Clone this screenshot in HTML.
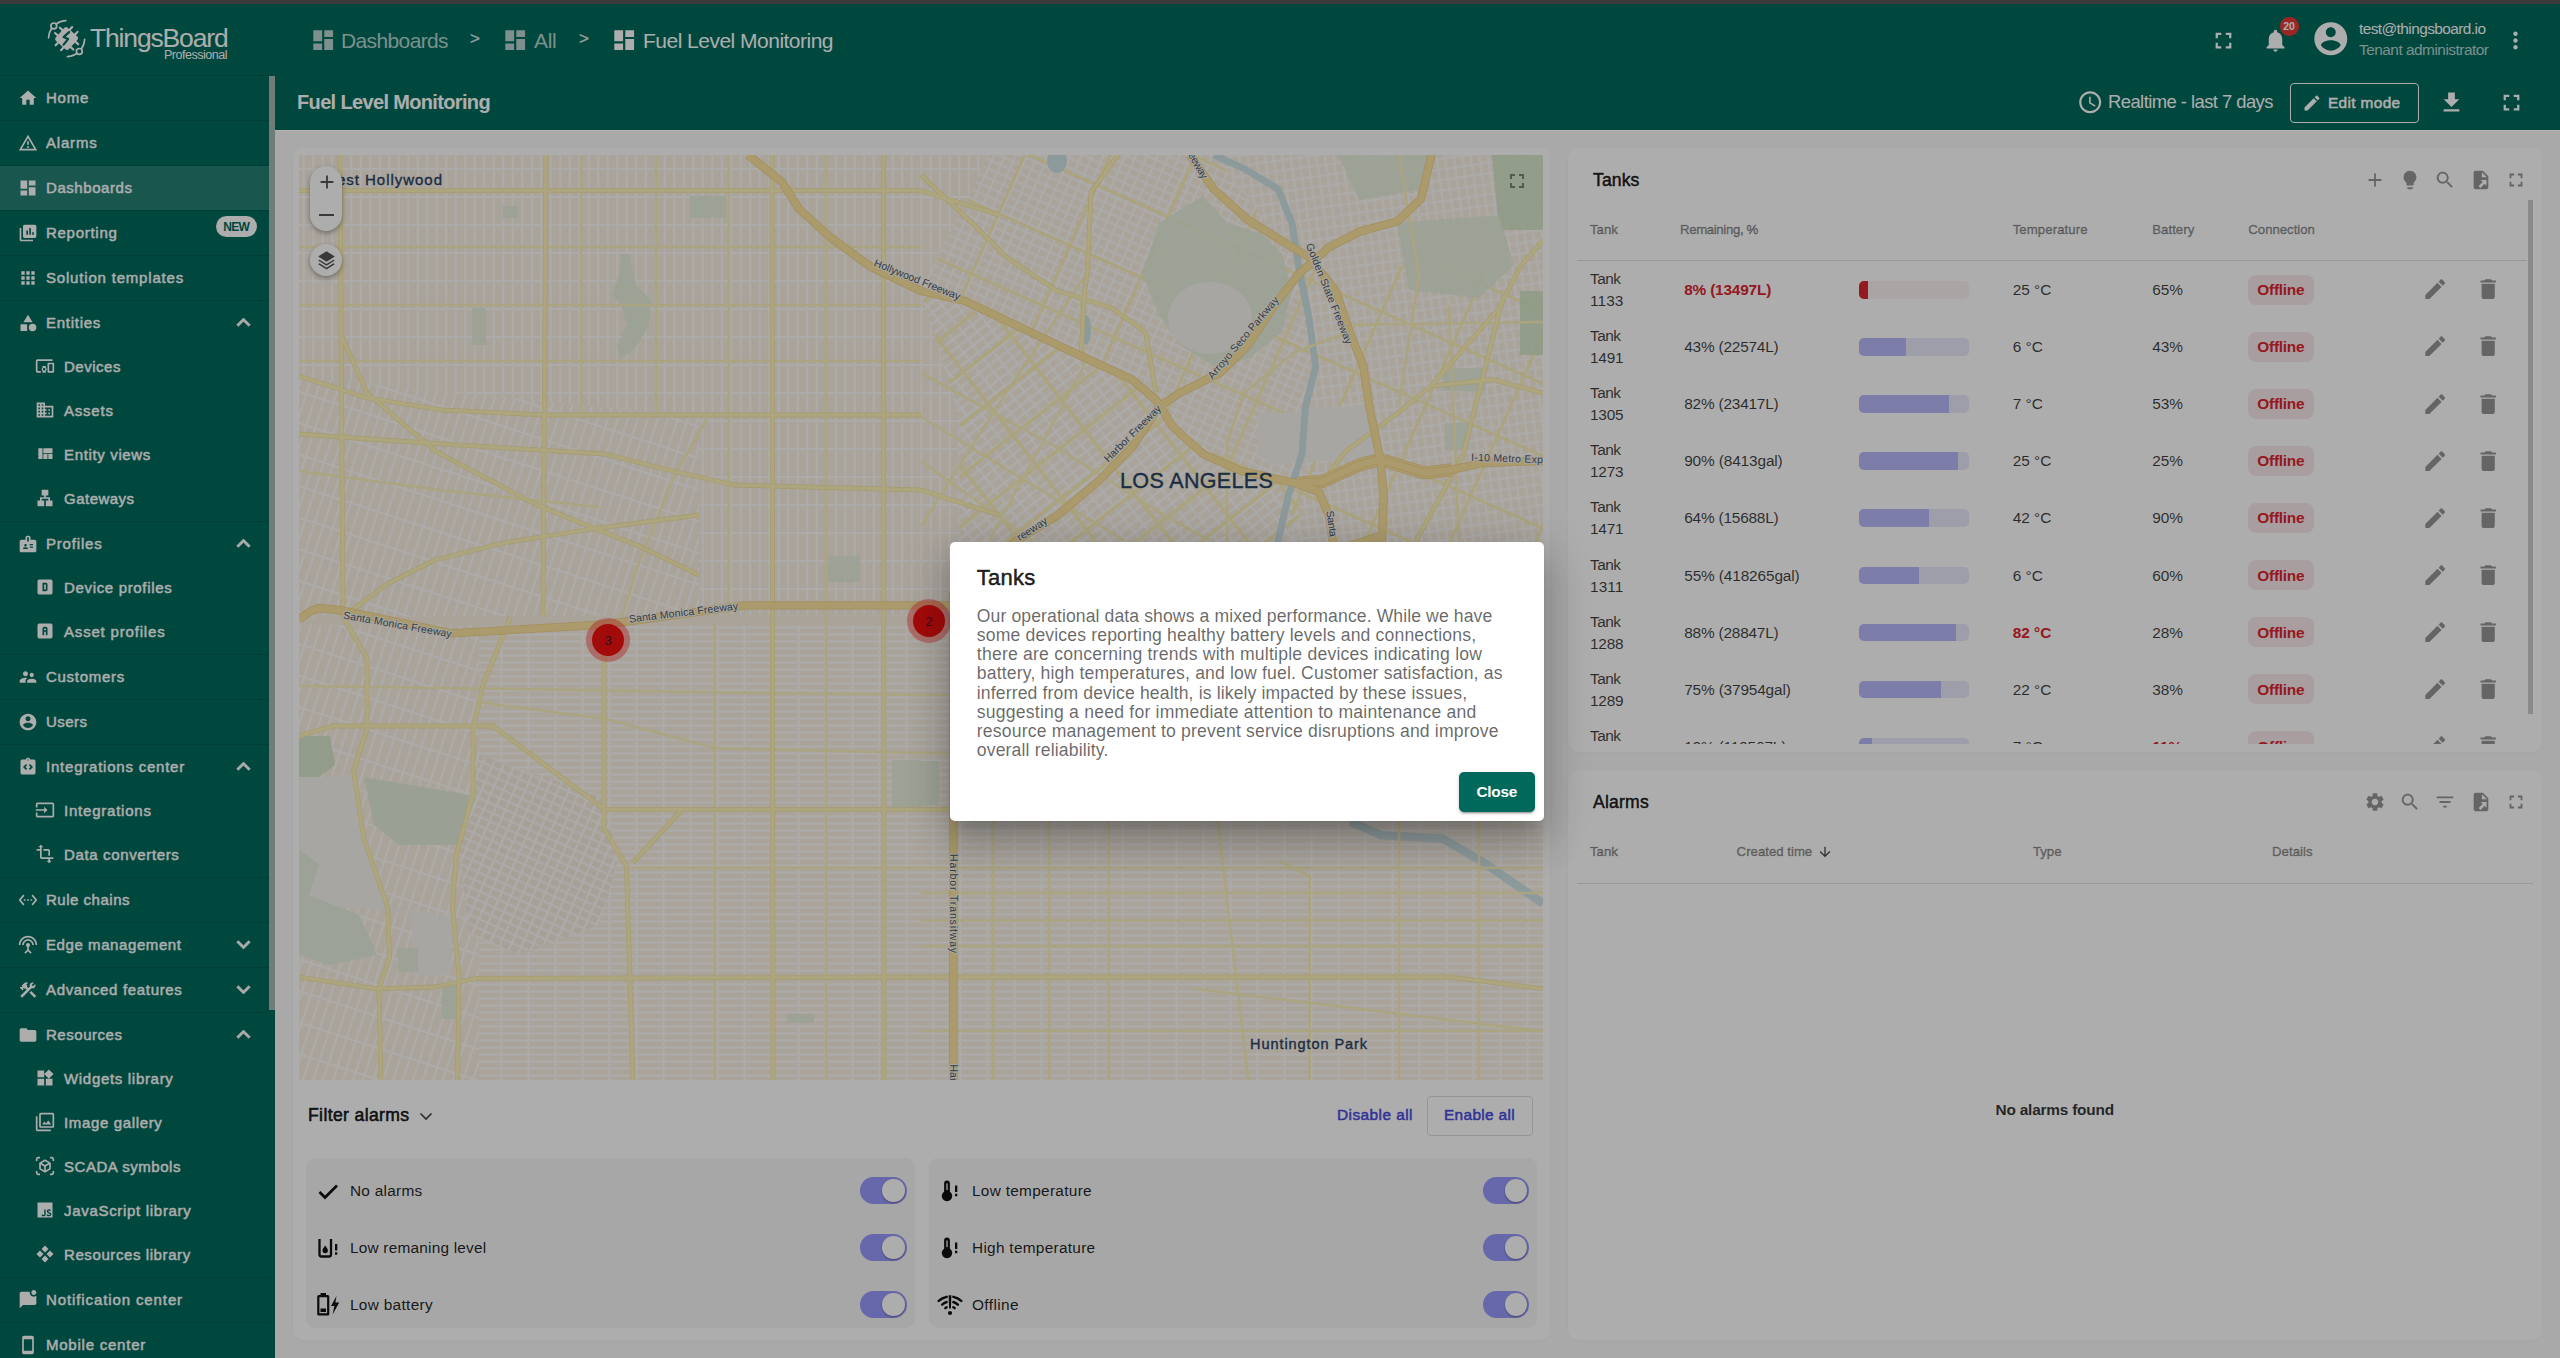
<!DOCTYPE html>
<html><head><meta charset="utf-8"><title>ThingsBoard</title>
<style>
html,body{margin:0;padding:0;}
body{width:2560px;height:1358px;overflow:hidden;position:relative;background:#fafafa;font-family:"Liberation Sans",sans-serif;}
.t{position:absolute;white-space:nowrap;margin:0;padding:0;}
.i{position:absolute;display:block;}
.b{position:absolute;box-sizing:border-box;}
</style></head><body>
<div class="b" style="left:0px;top:0px;width:2560px;height:1358px;background:#fafafa;"></div>
<div class="b" style="left:0px;top:4px;width:275px;height:1354px;background:#00695c;"></div>
<div class="b" style="left:275px;top:4px;width:2285px;height:71px;background:#00695c;"></div>
<div class="b" style="left:275px;top:75px;width:2285px;height:55px;background:#00695c;box-shadow:0 1px 0 rgba(255,255,255,0.0);"></div>
<div class="b" style="left:0px;top:74.5px;width:269px;height:1px;background:rgba(0,0,0,0.13);"></div>
<svg class="i" style="left:17.50px;top:87.50px;width:20px;height:20px;" viewBox="0 0 24 24"><path fill="#fff" fill-rule="evenodd" d="M10 20v-6h4v6h5v-8h3L12 3 2 12h3v8z"/></svg>
<div class="t" style="left:46.00px;top:90.20px;font-size:15px;line-height:15px;color:#fff;letter-spacing:0.747px;-webkit-text-stroke:0.45px #fff;">Home</div>
<div class="b" style="left:0px;top:119.5px;width:269px;height:1px;background:rgba(0,0,0,0.13);"></div>
<svg class="i" style="left:17.50px;top:132.50px;width:20px;height:20px;" viewBox="0 0 24 24"><path fill="#fff" fill-rule="evenodd" d="M12 5.99L19.53 19H4.47L12 5.99M12 2L1 21h22L12 2zm1 14h-2v2h2v-2zm0-6h-2v4h2v-4z"/></svg>
<div class="t" style="left:46.00px;top:135.20px;font-size:15px;line-height:15px;color:#fff;letter-spacing:0.805px;-webkit-text-stroke:0.45px #fff;">Alarms</div>
<div class="b" style="left:0px;top:164.5px;width:269px;height:1px;background:rgba(0,0,0,0.13);"></div>
<div class="b" style="left:0px;top:166.0px;width:269px;height:44px;background:rgba(255,255,255,0.15);"></div>
<svg class="i" style="left:17.50px;top:177.50px;width:20px;height:20px;" viewBox="0 0 24 24"><path fill="#fff" fill-rule="evenodd" d="M3 13h8V3H3v10zm0 8h8v-6H3v6zm10 0h8V11h-8v10zm0-18v6h8V3h-8z"/></svg>
<div class="t" style="left:46.00px;top:180.20px;font-size:15px;line-height:15px;color:#fff;letter-spacing:0.562px;-webkit-text-stroke:0.45px #fff;">Dashboards</div>
<div class="b" style="left:0px;top:209.5px;width:269px;height:1px;background:rgba(0,0,0,0.13);"></div>
<svg class="i" style="left:17.50px;top:222.50px;width:20px;height:20px;" viewBox="0 0 24 24"><path fill="#fff" fill-rule="evenodd" d="M4 6H2v14c0 1.1.9 2 2 2h14v-2H4V6zm16-4H8c-1.1 0-2 .9-2 2v12c0 1.1.9 2 2 2h12c1.1 0 2-.9 2-2V4c0-1.1-.9-2-2-2zm-8 12h-2V9h2v5zm3.5 0h-2V6h2v8zm3.5 0h-2v-3h2v3z"/></svg>
<div class="t" style="left:46.00px;top:225.20px;font-size:15px;line-height:15px;color:#fff;letter-spacing:0.718px;-webkit-text-stroke:0.45px #fff;">Reporting</div>
<div class="b" style="left:215.5px;top:215.5px;width:41.5px;height:21.5px;background:#fff;border-radius:11px;"></div>
<div class="t" style="left:223.20px;top:220.84px;font-size:12px;line-height:12px;color:#00695c;font-weight:700;letter-spacing:-0.666px;">NEW</div>
<div class="b" style="left:0px;top:254.5px;width:269px;height:1px;background:rgba(0,0,0,0.13);"></div>
<svg class="i" style="left:17.50px;top:267.50px;width:20px;height:20px;" viewBox="0 0 24 24"><path fill="#fff" fill-rule="evenodd" d="M4 8h4V4H4v4zm6 12h4v-4h-4v4zm-6 0h4v-4H4v4zm0-6h4v-4H4v4zm6 0h4v-4h-4v4zm6-10v4h4V4h-4zm-6 4h4V4h-4v4zm6 6h4v-4h-4v4zm0 6h4v-4h-4v4z"/></svg>
<div class="t" style="left:46.00px;top:270.20px;font-size:15px;line-height:15px;color:#fff;letter-spacing:0.811px;-webkit-text-stroke:0.45px #fff;">Solution templates</div>
<div class="b" style="left:0px;top:299.5px;width:269px;height:1px;background:rgba(0,0,0,0.13);"></div>
<svg class="i" style="left:17.50px;top:312.50px;width:20px;height:20px;" viewBox="0 0 24 24"><path fill="#fff" fill-rule="evenodd" d="M12 2l-5.5 9h11zM17.5 13a4.5 4.5 0 1 0 0 9a4.5 4.5 0 1 0 0-9zM3 13.5h8v8H3z"/></svg>
<div class="t" style="left:46.00px;top:315.20px;font-size:15px;line-height:15px;color:#fff;letter-spacing:0.726px;-webkit-text-stroke:0.45px #fff;">Entities</div>
<svg class="i" style="left:229.50px;top:309.00px;width:27px;height:27px;stroke:#fff;stroke-width:0.7px;" viewBox="0 0 24 24"><path fill="#fff" fill-rule="evenodd" d="M12 8l-6 6 1.41 1.41L12 10.83l4.59 4.58L18 14z"/></svg>
<svg class="i" style="left:35.00px;top:356.00px;width:20px;height:20px;" viewBox="0 0 24 24"><path fill="#fff" fill-rule="evenodd" d="M3 6h18V4H3c-1.1 0-2 .9-2 2v12c0 1.1.9 2 2 2h4v-2H3V6zm10 6H9v1.78c-.61.55-1 1.33-1 2.22s.39 1.67 1 2.22V20h4v-1.78c.61-.55 1-1.34 1-2.22s-.39-1.67-1-2.22V12zm-2 5.5c-.83 0-1.5-.67-1.5-1.5s.67-1.5 1.5-1.5 1.5.67 1.5 1.5-.67 1.5-1.5 1.5zM22 8h-6c-.5 0-1 .5-1 1v10c0 .5.5 1 1 1h6c.5 0 1-.5 1-1V9c0-.5-.5-1-1-1zm-1 10h-4v-8h4v8z"/></svg>
<div class="t" style="left:64.00px;top:358.70px;font-size:15px;line-height:15px;color:#fff;letter-spacing:0.521px;-webkit-text-stroke:0.45px #fff;">Devices</div>
<svg class="i" style="left:35.00px;top:400.00px;width:20px;height:20px;" viewBox="0 0 24 24"><path fill="#fff" fill-rule="evenodd" d="M12 7V3H2v18h20V7H12zM6 19H4v-2h2v2zm0-4H4v-2h2v2zm0-4H4V9h2v2zm0-4H4V5h2v2zm4 12H8v-2h2v2zm0-4H8v-2h2v2zm0-4H8V9h2v2zm0-4H8V5h2v2zm10 12h-8v-2h2v-2h-2v-2h2v-2h-2V9h8v10zm-2-8h-2v2h2v-2zm0 4h-2v2h2v-2z"/></svg>
<div class="t" style="left:64.00px;top:402.70px;font-size:15px;line-height:15px;color:#fff;letter-spacing:0.781px;-webkit-text-stroke:0.45px #fff;">Assets</div>
<svg class="i" style="left:35.00px;top:444.00px;width:20px;height:20px;" viewBox="0 0 24 24"><path fill="#fff" fill-rule="evenodd" d="M10 18h5v-6h-5v6zm-6 0h5V5H4v13zm12 0h5v-6h-5v6zM10 5v6h11V5H10z"/></svg>
<div class="t" style="left:64.00px;top:446.70px;font-size:15px;line-height:15px;color:#fff;letter-spacing:0.651px;-webkit-text-stroke:0.45px #fff;">Entity views</div>
<svg class="i" style="left:35.00px;top:488.00px;width:20px;height:20px;" viewBox="0 0 24 24"><path fill="#fff" fill-rule="evenodd" d="M13 22h8v-7h-3v-4h-5V9h3V2H8v7h3v2H6v4H3v7h8v-7H8v-2h8v2h-3z"/></svg>
<div class="t" style="left:64.00px;top:490.70px;font-size:15px;line-height:15px;color:#fff;letter-spacing:0.488px;-webkit-text-stroke:0.45px #fff;">Gateways</div>
<div class="b" style="left:0px;top:520.5px;width:269px;height:1px;background:rgba(0,0,0,0.13);"></div>
<svg class="i" style="left:17.50px;top:533.50px;width:20px;height:20px;" viewBox="0 0 24 24"><path fill="#fff" fill-rule="evenodd" d="M20 7h-5V4c0-1.1-.9-2-2-2h-2c-1.1 0-2 .9-2 2v3H4c-1.1 0-2 .9-2 2v11c0 1.1.9 2 2 2h16c1.1 0 2-.9 2-2V9c0-1.1-.9-2-2-2zM9 12c.83 0 1.5.67 1.5 1.5S9.83 15 9 15s-1.5-.67-1.5-1.5S8.17 12 9 12zm3 6H6v-.75c0-1 2-1.5 3-1.5s3 .5 3 1.5V18zm1-9h-2V4h2v5zm5 7.5h-4V15h4v1.5zm0-3h-4V12h4v1.5z"/></svg>
<div class="t" style="left:46.00px;top:536.20px;font-size:15px;line-height:15px;color:#fff;letter-spacing:0.810px;-webkit-text-stroke:0.45px #fff;">Profiles</div>
<svg class="i" style="left:229.50px;top:530.00px;width:27px;height:27px;stroke:#fff;stroke-width:0.7px;" viewBox="0 0 24 24"><path fill="#fff" fill-rule="evenodd" d="M12 8l-6 6 1.41 1.41L12 10.83l4.59 4.58L18 14z"/></svg>
<svg class="i" style="left:35.00px;top:577.00px;width:20px;height:20px;" viewBox="0 0 24 24"><path fill="#fff" fill-rule="evenodd" d="M5 3h14a2 2 0 0 1 2 2v14a2 2 0 0 1-2 2H5a2 2 0 0 1-2-2V5a2 2 0 0 1 2-2zM9 7v10h4a2 2 0 0 0 2-2V9a2 2 0 0 0-2-2H9zm2 2h2v6h-2V9z"/></svg>
<div class="t" style="left:64.00px;top:579.70px;font-size:15px;line-height:15px;color:#fff;letter-spacing:0.662px;-webkit-text-stroke:0.45px #fff;">Device profiles</div>
<svg class="i" style="left:35.00px;top:621.00px;width:20px;height:20px;" viewBox="0 0 24 24"><path fill="#fff" fill-rule="evenodd" d="M5 3h14a2 2 0 0 1 2 2v14a2 2 0 0 1-2 2H5a2 2 0 0 1-2-2V5a2 2 0 0 1 2-2zm6 4a2 2 0 0 0-2 2v8h2v-4h2v4h2V9a2 2 0 0 0-2-2h-2zm0 2h2v2h-2V9z"/></svg>
<div class="t" style="left:64.00px;top:623.70px;font-size:15px;line-height:15px;color:#fff;letter-spacing:0.819px;-webkit-text-stroke:0.45px #fff;">Asset profiles</div>
<div class="b" style="left:0px;top:653.5px;width:269px;height:1px;background:rgba(0,0,0,0.13);"></div>
<svg class="i" style="left:17.50px;top:666.50px;width:20px;height:20px;" viewBox="0 0 24 24"><path fill="#fff" fill-rule="evenodd" d="M16.5 12c1.38 0 2.49-1.12 2.49-2.5S17.88 7 16.5 7C15.12 7 14 8.12 14 9.5s1.12 2.5 2.5 2.5zM9 11c1.66 0 2.99-1.34 2.99-3S10.66 5 9 5C7.34 5 6 6.34 6 8s1.34 3 3 3zm7.5 3c-1.83 0-5.5.92-5.5 2.75V19h11v-2.25c0-1.83-3.67-2.75-5.5-2.75zM9 13c-2.33 0-7 1.17-7 3.5V19h7v-2.25c0-.85.33-2.34 2.37-3.47C10.5 13.1 9.66 13 9 13z"/></svg>
<div class="t" style="left:46.00px;top:669.20px;font-size:15px;line-height:15px;color:#fff;letter-spacing:0.720px;-webkit-text-stroke:0.45px #fff;">Customers</div>
<div class="b" style="left:0px;top:698.5px;width:269px;height:1px;background:rgba(0,0,0,0.13);"></div>
<svg class="i" style="left:17.50px;top:711.50px;width:20px;height:20px;" viewBox="0 0 24 24"><path fill="#fff" fill-rule="evenodd" d="M12 2C6.48 2 2 6.48 2 12s4.48 10 10 10 10-4.48 10-10S17.52 2 12 2zm0 3c1.66 0 3 1.34 3 3s-1.34 3-3 3-3-1.34-3-3 1.34-3 3-3zm0 14.2c-2.5 0-4.71-1.28-6-3.22.03-1.99 4-3.08 6-3.08 1.99 0 5.97 1.09 6 3.08-1.29 1.94-3.5 3.22-6 3.22z"/></svg>
<div class="t" style="left:46.00px;top:714.20px;font-size:15px;line-height:15px;color:#fff;letter-spacing:0.466px;-webkit-text-stroke:0.45px #fff;">Users</div>
<div class="b" style="left:0px;top:743.5px;width:269px;height:1px;background:rgba(0,0,0,0.13);"></div>
<svg class="i" style="left:17.50px;top:756.50px;width:20px;height:20px;" viewBox="0 0 24 24"><path fill="#fff" fill-rule="evenodd" d="M19 3h-4.18C14.4 1.84 13.3 1 12 1s-2.4.84-2.82 2H5c-1.1 0-2 .9-2 2v14c0 1.1.9 2 2 2h14c1.1 0 2-.9 2-2V5c0-1.1-.9-2-2-2zm-8 11.17l-1.41 1.42L6 12l3.59-3.59L11 9.83 8.83 12 11 14.17zm1-9.92c-.41 0-.75-.34-.75-.75s.34-.75.75-.75.75.34.75.75-.34.75-.75.75zm2.410 11.340L13 14.17 15.17 12 13 9.83l1.41-1.42L18 12l-3.59 3.59z"/></svg>
<div class="t" style="left:46.00px;top:759.20px;font-size:15px;line-height:15px;color:#fff;letter-spacing:0.777px;-webkit-text-stroke:0.45px #fff;">Integrations center</div>
<svg class="i" style="left:229.50px;top:753.00px;width:27px;height:27px;stroke:#fff;stroke-width:0.7px;" viewBox="0 0 24 24"><path fill="#fff" fill-rule="evenodd" d="M12 8l-6 6 1.41 1.41L12 10.83l4.59 4.58L18 14z"/></svg>
<svg class="i" style="left:35.00px;top:800.00px;width:20px;height:20px;" viewBox="0 0 24 24"><path fill="#fff" fill-rule="evenodd" d="M21 3.01H3c-1.1 0-2 .9-2 2V9h2V4.99h18v14.03H3V15H1v4.01c0 1.1.9 1.98 2 1.98h18c1.1 0 2-.88 2-1.98v-14c0-1.11-.9-2-2-2zM11 16l4-4-4-4v3H1v2h10v3z"/></svg>
<div class="t" style="left:64.00px;top:802.70px;font-size:15px;line-height:15px;color:#fff;letter-spacing:0.780px;-webkit-text-stroke:0.45px #fff;">Integrations</div>
<svg class="i" style="left:35.00px;top:844.00px;width:20px;height:20px;" viewBox="0 0 24 24"><path fill="#fff" fill-rule="evenodd" d="M22 18v-2H8V4h2L7 1 4 4h2v2H2v2h4v8c0 1.1.9 2 2 2h8v2h-2l3 3 3-3h-2v-2h4zM10 8h6v6h2V8c0-1.1-.9-2-2-2h-6v2z"/></svg>
<div class="t" style="left:64.00px;top:846.70px;font-size:15px;line-height:15px;color:#fff;letter-spacing:0.641px;-webkit-text-stroke:0.45px #fff;">Data converters</div>
<div class="b" style="left:0px;top:876.5px;width:269px;height:1px;background:rgba(0,0,0,0.13);"></div>
<svg class="i" style="left:17.50px;top:889.50px;width:20px;height:20px;" viewBox="0 0 24 24"><path fill="#fff" fill-rule="evenodd" d="M7.77 6.76L6.23 5.48.82 12l5.41 6.52 1.54-1.28L3.42 12l4.35-5.24zM7 13h2v-2H7v2zm10-2h-2v2h2v-2zm-6 2h2v-2h-2v2zm6.77-7.52l-1.54 1.28L20.58 12l-4.35 5.24 1.54 1.28L23.18 12l-5.41-6.52z"/></svg>
<div class="t" style="left:46.00px;top:892.20px;font-size:15px;line-height:15px;color:#fff;letter-spacing:0.511px;-webkit-text-stroke:0.45px #fff;">Rule chains</div>
<div class="b" style="left:0px;top:921.5px;width:269px;height:1px;background:rgba(0,0,0,0.13);"></div>
<svg class="i" style="left:17.50px;top:934.50px;width:20px;height:20px;" viewBox="0 0 24 24"><path fill="#fff" fill-rule="evenodd" d="M12 5c-3.87 0-7 3.13-7 7h2c0-2.76 2.24-5 5-5s5 2.24 5 5h2c0-3.87-3.13-7-7-7zm1 9.29c.88-.39 1.5-1.26 1.5-2.29 0-1.38-1.12-2.5-2.5-2.5S9.5 10.62 9.5 12c0 1.02.62 1.9 1.5 2.29v3.3L7.59 21 9 22.41l3-3 3 3L16.41 21 13 17.59v-3.3zM12 1C5.93 1 1 5.93 1 12h2c0-4.97 4.03-9 9-9s9 4.03 9 9h2c0-6.07-4.93-11-11-11z"/></svg>
<div class="t" style="left:46.00px;top:937.20px;font-size:15px;line-height:15px;color:#fff;letter-spacing:0.583px;-webkit-text-stroke:0.45px #fff;">Edge management</div>
<svg class="i" style="left:229.50px;top:931.00px;width:27px;height:27px;stroke:#fff;stroke-width:0.7px;" viewBox="0 0 24 24"><path fill="#fff" fill-rule="evenodd" d="M16.59 8.59L12 13.17 7.41 8.59 6 10l6 6 6-6z"/></svg>
<div class="b" style="left:0px;top:966.5px;width:269px;height:1px;background:rgba(0,0,0,0.13);"></div>
<svg class="i" style="left:17.50px;top:979.50px;width:20px;height:20px;" viewBox="0 0 24 24"><path fill="#fff" fill-rule="evenodd" d="M13.78 15.17l2.12-2.12 6 6-2.12 2.12zM17.5 10c1.93 0 3.5-1.57 3.5-3.5 0-.58-.16-1.12-.41-1.6l-2.7 2.7-1.49-1.49 2.7-2.7c-.48-.25-1.02-.41-1.6-.41C15.57 3 14 4.57 14 6.5c0 .41.08.8.21 1.16l-1.85 1.85-1.78-1.78.71-.71-1.41-1.41L12 3.49c-1.17-1.17-3.07-1.17-4.24 0L4.220 7.03l1.41 1.41H2.81l-.71.71 3.54 3.54.71-.71V9.15l1.41 1.41.71-.71 1.78 1.78-7.41 7.41 2.12 2.12L16.34 9.79c.36.13.75.21 1.16.21z"/></svg>
<div class="t" style="left:46.00px;top:982.20px;font-size:15px;line-height:15px;color:#fff;letter-spacing:0.671px;-webkit-text-stroke:0.45px #fff;">Advanced features</div>
<svg class="i" style="left:229.50px;top:976.00px;width:27px;height:27px;stroke:#fff;stroke-width:0.7px;" viewBox="0 0 24 24"><path fill="#fff" fill-rule="evenodd" d="M16.59 8.59L12 13.17 7.41 8.59 6 10l6 6 6-6z"/></svg>
<div class="b" style="left:0px;top:1011.5px;width:269px;height:1px;background:rgba(0,0,0,0.13);"></div>
<svg class="i" style="left:17.50px;top:1024.50px;width:20px;height:20px;" viewBox="0 0 24 24"><path fill="#fff" fill-rule="evenodd" d="M10 4H4c-1.1 0-1.99.9-1.99 2L2 18c0 1.1.9 2 2 2h16c1.1 0 2-.9 2-2V8c0-1.1-.9-2-2-2h-8l-2-2z"/></svg>
<div class="t" style="left:46.00px;top:1027.20px;font-size:15px;line-height:15px;color:#fff;letter-spacing:0.533px;-webkit-text-stroke:0.45px #fff;">Resources</div>
<svg class="i" style="left:229.50px;top:1021.00px;width:27px;height:27px;stroke:#fff;stroke-width:0.7px;" viewBox="0 0 24 24"><path fill="#fff" fill-rule="evenodd" d="M12 8l-6 6 1.41 1.41L12 10.83l4.59 4.58L18 14z"/></svg>
<svg class="i" style="left:35.00px;top:1068.00px;width:20px;height:20px;" viewBox="0 0 24 24"><path fill="#fff" fill-rule="evenodd" d="M13 13v8h8v-8h-8zM3 21h8v-8H3v8zM3 3v8h8V3H3zm13.66-1.31L11 7.34 16.66 13l5.66-5.66-5.66-5.65z"/></svg>
<div class="t" style="left:64.00px;top:1070.70px;font-size:15px;line-height:15px;color:#fff;letter-spacing:0.687px;-webkit-text-stroke:0.45px #fff;">Widgets library</div>
<svg class="i" style="left:35.00px;top:1112.00px;width:20px;height:20px;" viewBox="0 0 24 24"><path fill="#fff" fill-rule="evenodd" d="M15.96 10.29l-2.75 3.54-1.96-2.36L8.5 15h11l-3.54-4.71zM3 5H1v16c0 1.1.9 2 2 2h16v-2H3V5zm18-4H7c-1.1 0-2 .9-2 2v14c0 1.1.9 2 2 2h14c1.1 0 2-.9 2-2V3c0-1.1-.9-2-2-2zm0 16H7V3h14v14z"/></svg>
<div class="t" style="left:64.00px;top:1114.70px;font-size:15px;line-height:15px;color:#fff;letter-spacing:0.650px;-webkit-text-stroke:0.45px #fff;">Image gallery</div>
<svg class="i" style="left:35.00px;top:1156.00px;width:20px;height:20px;" viewBox="0 0 24 24"><path fill="#fff" fill-rule="evenodd" d="M3 4c0-.55.45-1 1-1h2V1H4C2.34 1 1 2.34 1 4v2h2V4zM3 20v-2H1v2c0 1.66 1.34 3 3 3h2v-2H4c-.55 0-1-.45-1-1zM20 1h-2v2h2c.55 0 1 .45 1 1v2h2V4c0-1.66-1.34-3-3-3zM21 20c0 .55-.45 1-1 1h-2v2h2c1.66 0 3-1.34 3-3v-2h-2v2zM19 14.87V9.13c0-.72-.38-1.38-1-1.73l-5-2.88c-.31-.18-.65-.27-1-.27s-.69.09-1 .27L6 7.390c-.62.36-1 1.02-1 1.74v5.74c0 .72.38 1.38 1 1.73l5 2.88c.31.18.65.27 1 .27s.69-.09 1-.27l5-2.88c.62-.35 1-1.01 1-1.73zm-8 2.3l-4-2.3v-4.63l4 2.33v4.6zm1-6.33L8.04 8.53 12 6.25l3.96 2.28L12 10.84zm5 4.03l-4 2.3v-4.6l4-2.33v4.63z"/></svg>
<div class="t" style="left:64.00px;top:1158.70px;font-size:15px;line-height:15px;color:#fff;letter-spacing:0.536px;-webkit-text-stroke:0.45px #fff;">SCADA symbols</div>
<svg class="i" style="left:35.00px;top:1200.00px;width:20px;height:20px;" viewBox="0 0 24 24"><path fill="#fff" fill-rule="evenodd" d="M3 3h18v18H3V3m4.73 15.04c.4.85 1.19 1.55 2.54 1.55 1.5 0 2.53-.8 2.53-2.55v-5.78h-1.7V17c0 .86-.35 1.08-.9 1.08-.58 0-.82-.4-1.09-.87l-1.38.83m5.98-.18c.5.98 1.51 1.73 3.09 1.73 1.6 0 2.8-.83 2.8-2.36 0-1.41-.81-2.04-2.25-2.66l-.42-.18c-.73-.31-1.04-.52-1.04-1.02 0-.41.31-.73.81-.73.48 0 .8.21 1.09.73l1.31-.87c-.55-.96-1.33-1.33-2.4-1.33-1.51 0-2.48.96-2.48 2.23 0 1.38.81 2.030 2.03 2.55l.42.18c.78.34 1.24.55 1.24 1.13 0 .48-.45.83-1.15.83-.83 0-1.31-.43-1.67-1.03l-1.38.8z"/></svg>
<div class="t" style="left:64.00px;top:1202.70px;font-size:15px;line-height:15px;color:#fff;letter-spacing:0.692px;-webkit-text-stroke:0.45px #fff;">JavaScript library</div>
<svg class="i" style="left:35.00px;top:1244.00px;width:20px;height:20px;" viewBox="0 0 24 24"><path fill="#fff" fill-rule="evenodd" d="M12 1.800l4.200 4.200L12 10.200 7.800 6zM6 7.800L10.200 12 6 16.200 1.800 12zM18 7.800l4.200 4.200L18 16.200 13.800 12zM12 13.800l4.200 4.200L12 22.200 7.800 18z"/></svg>
<div class="t" style="left:64.00px;top:1246.70px;font-size:15px;line-height:15px;color:#fff;letter-spacing:0.591px;-webkit-text-stroke:0.45px #fff;">Resources library</div>
<div class="b" style="left:0px;top:1276.5px;width:269px;height:1px;background:rgba(0,0,0,0.13);"></div>
<svg class="i" style="left:17.50px;top:1289.50px;width:20px;height:20px;" viewBox="0 0 24 24"><path fill="#fff" fill-rule="evenodd" d="M22 6.98V16c0 1.1-.9 2-2 2H6l-4 4V4c0-1.1.9-2 2-2h10.1c-.06.32-.1.66-.1 1 0 2.76 2.24 5 5 5 1.13 0 2.16-.39 3-1.020zM16 3c0 1.66 1.34 3 3 3s3-1.34 3-3-1.34-3-3-3-3 1.34-3 3z"/></svg>
<div class="t" style="left:46.00px;top:1292.20px;font-size:15px;line-height:15px;color:#fff;letter-spacing:0.892px;-webkit-text-stroke:0.45px #fff;">Notification center</div>
<div class="b" style="left:0px;top:1321.5px;width:269px;height:1px;background:rgba(0,0,0,0.13);"></div>
<svg class="i" style="left:17.50px;top:1334.50px;width:20px;height:20px;" viewBox="0 0 24 24"><path fill="#fff" fill-rule="evenodd" d="M17 1.01L7 1c-1.1 0-2 .9-2 2v18c0 1.1.9 2 2 2h10c1.1 0 2-.9 2-2V3c0-1.1-.9-1.99-2-1.99zM17 19H7V5h10v14z"/></svg>
<div class="t" style="left:46.00px;top:1337.20px;font-size:15px;line-height:15px;color:#fff;letter-spacing:0.766px;-webkit-text-stroke:0.45px #fff;">Mobile center</div>
<div class="b" style="left:269px;top:76px;width:6px;height:934px;background:#a3b8b4;"></div>
<svg class="i" style="left:44px;top:16px;width:44px;height:44px" viewBox="44 16 44 44">
<g stroke="#fff" fill="none" stroke-width="1.700" stroke-linecap="round">
<path d="M65.800 20.600A18 18 0 0 0 48.600 37.800"/><path d="M84.600 39.400A18 18 0 0 1 67.400 56.600"/>
<circle cx="53.800" cy="25.900" r="2.900" fill="#00695c"/><circle cx="79.300" cy="51.400" r="2.900" fill="#00695c"/></g>
<g transform="translate(66.600 38.600) rotate(42)">
<g stroke="#fff" stroke-width="2.200" stroke-linecap="round"><path d="M-3.600 -8V-12.300M3.600 -8V-12.300M-3.600 8V12.300M3.600 8V12.300M-8 -3.600H-12.300M-8 3.600H-12.300M8 -3.600H12.300M8 3.600H12.300"/></g>
<rect x="-8.800" y="-8.800" width="17.600" height="17.600" rx="2.600" fill="#fff"/>
<path d="M2.500 -6.500L-3 -1.500L1.500 0.500L-3 6" transform="rotate(-42)" fill="none" stroke="#00695c" stroke-width="2.200" stroke-linejoin="round" stroke-linecap="round"/>
</g></svg>
<div class="t" style="left:90.00px;top:24.57px;font-size:26.5px;line-height:26.5px;color:#fff;letter-spacing:-1.160px;">ThingsBoard</div>
<div class="t" style="left:164.00px;top:49.42px;font-size:12.5px;line-height:12.5px;color:#fff;letter-spacing:-0.482px;">Professional</div>
<svg class="i" style="left:309.80px;top:26.80px;width:26.4px;height:26.4px;" viewBox="0 0 24 24"><path fill="rgba(255,255,255,0.72)" fill-rule="evenodd" d="M3 13h8V3H3v10zm0 8h8v-6H3v6zm10 0h8V11h-8v10zm0-18v6h8V3h-8z"/></svg>
<div class="t" style="left:341.00px;top:29.72px;font-size:21px;line-height:21px;color:rgba(255,255,255,0.72);letter-spacing:-0.624px;">Dashboards</div>
<div class="t" style="left:470.00px;top:30.11px;font-size:17px;line-height:17px;color:rgba(255,255,255,0.85);-webkit-text-stroke:0.3px rgba(255,255,255,0.85);">&gt;</div>
<svg class="i" style="left:501.80px;top:26.80px;width:26.4px;height:26.4px;" viewBox="0 0 24 24"><path fill="rgba(255,255,255,0.72)" fill-rule="evenodd" d="M3 13h8V3H3v10zm0 8h8v-6H3v6zm10 0h8V11h-8v10zm0-18v6h8V3h-8z"/></svg>
<div class="t" style="left:534.00px;top:29.72px;font-size:21px;line-height:21px;color:rgba(255,255,255,0.72);letter-spacing:-0.280px;">All</div>
<div class="t" style="left:579.00px;top:30.11px;font-size:17px;line-height:17px;color:rgba(255,255,255,0.85);-webkit-text-stroke:0.3px rgba(255,255,255,0.85);">&gt;</div>
<svg class="i" style="left:610.80px;top:26.80px;width:26.4px;height:26.4px;" viewBox="0 0 24 24"><path fill="#fff" fill-rule="evenodd" d="M3 13h8V3H3v10zm0 8h8v-6H3v6zm10 0h8V11h-8v10zm0-18v6h8V3h-8z"/></svg>
<div class="t" style="left:643.00px;top:29.72px;font-size:21px;line-height:21px;color:#fff;letter-spacing:-0.513px;">Fuel Level Monitoring</div>
<svg class="i" style="left:2209.50px;top:26.50px;width:27px;height:27px;" viewBox="0 0 24 24"><path fill="#fff" fill-rule="evenodd" d="M7 14H5v5h5v-2H7v-3zm-2-4h2V7h3V5H5v5zm12 7h-3v2h5v-5h-2v3zM14 5v2h3v3h2V5h-5z"/></svg>
<svg class="i" style="left:2262.00px;top:26.50px;width:27px;height:27px;" viewBox="0 0 24 24"><path fill="#fff" fill-rule="evenodd" d="M12 22c1.1 0 2-.9 2-2h-4c0 1.1.89 2 2 2zm6-6v-5c0-3.07-1.64-5.64-4.5-6.32V4c0-.83-.67-1.5-1.5-1.5s-1.5.67-1.5 1.5v.68C7.63 5.36 6 7.92 6 11v5l-2 2v1h16v-1l-2-2z"/></svg>
<div class="b" style="left:2280px;top:17px;width:18.5px;height:18.5px;background:#e53935;border-radius:9.250px;"></div>
<div class="t" style="left:2283.16px;top:20.91px;font-size:10.5px;line-height:10.5px;color:#fff;font-weight:700;">20</div>
<svg class="i" style="left:2310.70px;top:19.20px;width:39.6px;height:39.6px;" viewBox="0 0 24 24"><path fill="#fff" fill-rule="evenodd" d="M12 2C6.48 2 2 6.48 2 12s4.48 10 10 10 10-4.48 10-10S17.52 2 12 2zm0 3c1.66 0 3 1.34 3 3s-1.34 3-3 3-3-1.34-3-3 1.34-3 3-3zm0 14.2c-2.5 0-4.71-1.28-6-3.22.03-1.99 4-3.08 6-3.08 1.99 0 5.97 1.09 6 3.08-1.29 1.94-3.5 3.22-6 3.22z"/></svg>
<div class="t" style="left:2359.00px;top:20.96px;font-size:15.4px;line-height:15.4px;color:#fff;letter-spacing:-0.563px;">test@thingsboard.io</div>
<div class="t" style="left:2359.00px;top:41.66px;font-size:15.4px;line-height:15.4px;color:rgba(255,255,255,0.72);letter-spacing:-0.501px;">Tenant administrator</div>
<svg class="i" style="left:2501.50px;top:26.50px;width:27px;height:27px;" viewBox="0 0 24 24"><path fill="#fff" fill-rule="evenodd" d="M12 8c1.1 0 2-.9 2-2s-.9-2-2-2-2 .9-2 2 .9 2 2 2zm0 2c-1.1 0-2 .9-2 2s.9 2 2 2 2-.9 2-2-.9-2-2-2zm0 6c-1.1 0-2 .9-2 2s.9 2 2 2 2-.9 2-2-.9-2-2-2z"/></svg>
<div class="t" style="left:297.00px;top:92.37px;font-size:20px;line-height:20px;color:#fff;font-weight:700;letter-spacing:-0.651px;">Fuel Level Monitoring</div>
<svg class="i" style="left:2076.80px;top:89.30px;width:26.4px;height:26.4px;" viewBox="0 0 24 24"><path fill="#fff" fill-rule="evenodd" d="M11.99 2C6.47 2 2 6.48 2 12s4.47 10 9.99 10C17.52 22 22 17.52 22 12S17.52 2 11.99 2zM12 20c-4.42 0-8-3.58-8-8s3.58-8 8-8 8 3.58 8 8-3.58 8-8 8zm.5-13H11v6l5.25 3.15.75-1.23-4.5-2.67z"/></svg>
<div class="t" style="left:2108.00px;top:92.62px;font-size:18.4px;line-height:18.4px;color:#fff;letter-spacing:-0.542px;">Realtime - last 7 days</div>
<div class="b" style="left:2290px;top:83px;width:129px;height:40px;border:1px solid #fff;border-radius:4px;"></div>
<svg class="i" style="left:2302.00px;top:92.50px;width:20px;height:20px;" viewBox="0 0 24 24"><path fill="#fff" fill-rule="evenodd" d="M3 17.25V21h3.75L17.81 9.94l-3.75-3.75L3 17.25zM20.71 7.04c.39-.39.39-1.02 0-1.41l-2.34-2.34c-.39-.39-1.02-.39-1.41 0l-1.83 1.83 3.75 3.75 1.830-1.830z"/></svg>
<div class="t" style="left:2328.00px;top:94.96px;font-size:15.4px;line-height:15.4px;color:#fff;letter-spacing:0.351px;-webkit-text-stroke:0.5px #fff;">Edit mode</div>
<svg class="i" style="left:2437.50px;top:89.00px;width:27px;height:27px;" viewBox="0 0 24 24"><path fill="#fff" fill-rule="evenodd" d="M19 9h-4V3H9v6H5l7 7 7-7zM5 18v2h14v-2H5z"/></svg>
<svg class="i" style="left:2497.50px;top:89.00px;width:27px;height:27px;" viewBox="0 0 24 24"><path fill="#fff" fill-rule="evenodd" d="M7 14H5v5h5v-2H7v-3zm-2-4h2V7h3V5H5v5zm12 7h-3v2h5v-5h-2v3zM14 5v2h3v3h2V5h-5z"/></svg>
<div class="b" style="left:293px;top:148px;width:1257px;height:1192px;background:#fff;border-radius:10px;box-shadow:0 1px 4px rgba(0,0,0,0.03);"></div>
<svg class="i" style="left:299px;top:155px;width:1244px;height:925px" viewBox="0 0 1244 925"><defs>
<pattern id="pA" width="9.500" height="28" patternUnits="userSpaceOnUse"><path d="M4.750 0V28M0 14H9.500" stroke="#fff" stroke-width="2.200" fill="none" opacity=".85"/></pattern>
<pattern id="pB" width="27" height="7" patternUnits="userSpaceOnUse"><path d="M13.500 0V7M0 3.500H27" stroke="#fff" stroke-width="2" fill="none" opacity=".85"/></pattern>
<pattern id="pC" width="9.500" height="30" patternUnits="userSpaceOnUse" patternTransform="rotate(18)"><path d="M4.750 0V30M0 15H9.500" stroke="#fff" stroke-width="2.200" fill="none" opacity=".85"/></pattern>
<pattern id="pD" width="12" height="8.500" patternUnits="userSpaceOnUse" patternTransform="rotate(-38)"><path d="M6 0V8.500M0 4.250H12" stroke="#fff" stroke-width="2.200" fill="none" opacity=".85"/></pattern>
<pattern id="pE" width="10" height="8.500" patternUnits="userSpaceOnUse" patternTransform="rotate(24)"><path d="M5 0V8.500M0 4.250H10" stroke="#fff" stroke-width="2.100" fill="none" opacity=".85"/></pattern>
<pattern id="pF" width="8.500" height="10.500" patternUnits="userSpaceOnUse" patternTransform="rotate(-8)"><path d="M4.250 0V10.500M0 5.250H8.500" stroke="#fff" stroke-width="2.100" fill="none" opacity=".85"/></pattern>
<pattern id="pDY" width="60" height="40" patternUnits="userSpaceOnUse" patternTransform="rotate(-38)"><path d="M30 0V40M0 20H60" stroke="#fdf0b4" stroke-width="3" fill="none"/></pattern>
<pattern id="pEY" width="78" height="66" patternUnits="userSpaceOnUse" patternTransform="rotate(24)"><path d="M39 0V66M0 33H78" stroke="#fdf0b4" stroke-width="2.600" fill="none"/></pattern>
</defs><rect width="1244" height="925" fill="#faf0e3"/><path d="M0 0 L690 0 L622 136 L660 262 L660 460 L400 460 L400 262 L0 222Z" fill="url(#pA)" /><path d="M0 222 L400 262 L400 460 L0 462Z" fill="url(#pC)" /><path d="M180 470 L1244 470 L1244 925 L180 925Z" fill="url(#pB)" /><path d="M0 470 L180 470 L180 925 L0 925Z" fill="url(#pC)" /><path d="M622 136 L724 173 L833 224 L874 272 L942 316 L1000 330 L1000 470 L660 470 L660 262Z" fill="url(#pD)" /><path d="M690 0 L915 0 L1000 110 L1016 211 L1003 299 L990 330 L942 316 L874 272 L833 224 L724 173 L622 136Z" fill="url(#pE)" /><path d="M915 0 L1244 0 L1244 470 L1000 470 L990 330 L1003 299 L1016 211 L1000 110Z" fill="url(#pF)" /><path d="M622 136 L724 173 L833 224 L874 272 L942 316 L1000 330 L1000 470 L660 470 L660 262Z" fill="url(#pDY)" /><path d="M690 0 L915 0 L1000 110 L1016 211 L1003 299 L990 330 L942 316 L874 272 L833 224 L724 173 L622 136Z" fill="url(#pEY)" /><path d="M1000 110 L1244 110 L1244 470 L1000 470 L990 330 L1003 299 L1016 211Z" fill="url(#pEY)" /><path d="M0 622 L54.6 622 L68 684 L85 752 L153.5 762 L150 820 L112.5 820 L112.5 759 L88.7 755 L34 752 L0 742Z" fill="#f8f5ef" /><path d="M1003 252 L1074 252 L1078 306 L1003 306Z" fill="#f8f5ef" /><path d="M959 258 L1003 258 L1003 306 L975 310 L959 300Z" fill="#f8f5ef" /><path d="M180 600 L300 640 L320 700 L300 770 L220 800 L170 780 L160 690Z" fill="#f6ecdf" /><path d="M180 600 L300 640 L320 700 L300 770 L220 800 L170 780 L160 690Z" fill="url(#pE)" /><path d="M860 68 L904 41 L928 68 L962 78 L983 99 L993 136 L983 177 L949 204 L915 211 L881 190 L860 160 L843 119Z" fill="#e3eeda"  fill-opacity=".82"/><ellipse cx="911" cy="163" rx="42" ry="36" fill="#f8f5ef"/><path d="M1193 0 L1244 0 L1244 75 L1200 75Z" fill="#cfe3c3"  fill-opacity=".82"/><path d="M1098 68 L1200 60 L1215 110 L1180 143 L1110 135Z" fill="#e3eeda"  fill-opacity=".82"/><path d="M1221 136 L1244 136 L1244 200 L1221 200Z" fill="#cfe3c3"  fill-opacity=".82"/><path d="M1039 0 L1138 0 L1120 35 L1060 45Z" fill="#e3eeda"  fill-opacity=".82"/><path d="M1143.5 213 L1187 213 L1187 236 L1143.5 236Z" fill="#e3eeda"  fill-opacity=".82"/><path d="M1146 268 L1170 268 L1170 295 L1146 295Z" fill="#e3eeda"  fill-opacity=".82"/><path d="M322 99 L330 99 L337 130 L352 145 L350 170 L335 195 L320 204 L318 190 L328 170 L322 150 L313 140 L320 120Z" fill="#e3eeda"  fill-opacity=".82"/><path d="M391 41 L427 41 L427 63 L391 63Z" fill="#e3eeda"  fill-opacity=".82"/><path d="M173 153 L187 153 L187 190 L173 190Z" fill="#e3eeda"  fill-opacity=".82"/><path d="M529 401 L561 401 L561 427 L529 427Z" fill="#e3eeda"  fill-opacity=".82"/><path d="M204 51 L218 51 L218 63 L204 63Z" fill="#e3eeda"  fill-opacity=".82"/><path d="M0 581 L31 581 L36 610 L20 622 L0 622Z" fill="#cfe3c3"  fill-opacity=".82"/><path d="M65 622 L170 640 L160 690 L100 690 L75 670Z" fill="#e3eedb" /><path d="M0 694 L20 710 L10 740 L60 760 L78 800 L30 810 L0 800Z" fill="#e6efdf" /><path d="M99 793 L119 793 L119 817 L99 817Z" fill="#e3eeda"  fill-opacity=".82"/><path d="M143 830 L157 830 L157 864 L143 864Z" fill="#e3eeda"  fill-opacity=".82"/><path d="M593 605 L622 605 L622 653 L593 653Z" fill="#e3eeda"  fill-opacity=".82"/><path d="M488 859 L515 859 L515 868 L488 868Z" fill="#e3eeda"  fill-opacity=".82"/><path d="M622 606 L640 606 L640 650 L622 650Z" fill="#e3eeda"  fill-opacity=".82"/><path d="M914.6 0 L945 13.6 L979 34 L993 68 L999.7 112 L1010 163 L1016.7 211 L1006.5 251.8 L1003 299 L989.5 340 L979 386 L970 430" fill="none" stroke="#d0e3e6" stroke-width="7" stroke-linejoin="round" stroke-linecap="butt" /><path d="M1051.7 666.6 L1082.4 680.3 L1143.8 683.7 L1184.7 707.6 L1244 748.5" fill="none" stroke="#d0e3e6" stroke-width="8.5" stroke-linejoin="round" stroke-linecap="butt" /><ellipse cx="787" cy="175" rx="5" ry="15" fill="#d0e3e6"/><ellipse cx="758" cy="6" rx="10" ry="12" fill="#d0e3e6"/><path d="M0 92 L622 92" fill="none" stroke="#fdf2bd" stroke-width="2.6" stroke-linejoin="round" stroke-linecap="butt" /><path d="M0 150 L622 150" fill="none" stroke="#fdf2bd" stroke-width="2.6" stroke-linejoin="round" stroke-linecap="butt" /><path d="M0 206 L622 206" fill="none" stroke="#fdf2bd" stroke-width="2.6" stroke-linejoin="round" stroke-linecap="butt" /><path d="M282 0 L282 260" fill="none" stroke="#fdf2bd" stroke-width="2.6" stroke-linejoin="round" stroke-linecap="butt" /><path d="M527 0 L527 925" fill="none" stroke="#fdf2bd" stroke-width="2.6" stroke-linejoin="round" stroke-linecap="butt" /><path d="M357 0 L357 260" fill="none" stroke="#fdf2bd" stroke-width="2.6" stroke-linejoin="round" stroke-linecap="butt" /><path d="M430 0 L430 462" fill="none" stroke="#fdf2bd" stroke-width="2.6" stroke-linejoin="round" stroke-linecap="butt" /><path d="M0 316 L140 335 L300 352" fill="none" stroke="#fdf2bd" stroke-width="2.6" stroke-linejoin="round" stroke-linecap="butt" /><path d="M408 264 L374 323 L340 408 L323 462" fill="none" stroke="#fdf2bd" stroke-width="2.6" stroke-linejoin="round" stroke-linecap="butt" /><path d="M0 531 L622 540 L1244 540" fill="none" stroke="#fdf2bd" stroke-width="2.6" stroke-linejoin="round" stroke-linecap="butt" /><path d="M177 547 L307 564 L416 593 L622 598 L1244 598" fill="none" stroke="#fdf2bd" stroke-width="2.6" stroke-linejoin="round" stroke-linecap="butt" /><path d="M334 712.7 L1244 712.7" fill="none" stroke="#fdf2bd" stroke-width="2.6" stroke-linejoin="round" stroke-linecap="butt" /><path d="M416 470 L416 925" fill="none" stroke="#fdf2bd" stroke-width="2.6" stroke-linejoin="round" stroke-linecap="butt" /><path d="M622 765.5 L1244 765.5" fill="none" stroke="#fdf2bd" stroke-width="2.6" stroke-linejoin="round" stroke-linecap="butt" /><path d="M622 791 L1244 791" fill="none" stroke="#fdf2bd" stroke-width="2.6" stroke-linejoin="round" stroke-linecap="butt" /><path d="M622 738 L1244 738" fill="none" stroke="#fdf2bd" stroke-width="2.6" stroke-linejoin="round" stroke-linecap="butt" /><path d="M809.6 470 L809.6 925" fill="none" stroke="#fdf2bd" stroke-width="2.6" stroke-linejoin="round" stroke-linecap="butt" /><path d="M918.7 666.6 L949.4 925" fill="none" stroke="#fdf2bd" stroke-width="2.6" stroke-linejoin="round" stroke-linecap="butt" /><path d="M980 706 L1010.8 721 L1010.8 925" fill="none" stroke="#fdf2bd" stroke-width="2.6" stroke-linejoin="round" stroke-linecap="butt" /><path d="M895 833.7 L1244 876.4" fill="none" stroke="#fdf2bd" stroke-width="2.6" stroke-linejoin="round" stroke-linecap="butt" /><path d="M622 876 L1244 876" fill="none" stroke="#fdf2bd" stroke-width="2.6" stroke-linejoin="round" stroke-linecap="butt" /><path d="M622 218 L758 292.6 L860 357 L911 386" fill="none" stroke="#fdf2bd" stroke-width="2.6" stroke-linejoin="round" stroke-linecap="butt" /><path d="M622 262 L826 386" fill="none" stroke="#fdf2bd" stroke-width="2.6" stroke-linejoin="round" stroke-linecap="butt" /><path d="M622 306 L734 386" fill="none" stroke="#fdf2bd" stroke-width="2.6" stroke-linejoin="round" stroke-linecap="butt" /><path d="M622 371 L707 238 L792 112" fill="none" stroke="#fdf2bd" stroke-width="2.6" stroke-linejoin="round" stroke-linecap="butt" /><path d="M690 386 L785 211 L782 143" fill="none" stroke="#fdf2bd" stroke-width="2.6" stroke-linejoin="round" stroke-linecap="butt" /><path d="M1047 170 L1244 167" fill="none" stroke="#fdf2bd" stroke-width="2.6" stroke-linejoin="round" stroke-linecap="butt" /><path d="M945 238 L996 197 L1050.7 177" fill="none" stroke="#fdf2bd" stroke-width="2.6" stroke-linejoin="round" stroke-linecap="butt" /><path d="M928 386 L928 289 L945 238" fill="none" stroke="#fdf2bd" stroke-width="2.6" stroke-linejoin="round" stroke-linecap="butt" /><path d="M694 470 L694 925" fill="none" stroke="#fdf2bd" stroke-width="2.6" stroke-linejoin="round" stroke-linecap="butt" /><path d="M750 470 L750 925" fill="none" stroke="#fdf2bd" stroke-width="2.6" stroke-linejoin="round" stroke-linecap="butt" /><path d="M1100 470 L1100 925" fill="none" stroke="#fdf2bd" stroke-width="2.6" stroke-linejoin="round" stroke-linecap="butt" /><path d="M1180 470 L1180 925" fill="none" stroke="#fdf2bd" stroke-width="2.6" stroke-linejoin="round" stroke-linecap="butt" /><path d="M1100 0 L1120 120 L1100 250" fill="none" stroke="#fdf2bd" stroke-width="2.6" stroke-linejoin="round" stroke-linecap="butt" /><path d="M1150 150 L1160 386" fill="none" stroke="#fdf2bd" stroke-width="2.6" stroke-linejoin="round" stroke-linecap="butt" /><path d="M0 35.7 L622 35.7 L700 60" fill="none" stroke="#f4e3a4" stroke-width="4.8" stroke-linejoin="round" stroke-linecap="butt" /><path d="M0 221 L68 243 L143 255 L245 260 L622 260" fill="none" stroke="#f4e3a4" stroke-width="4.8" stroke-linejoin="round" stroke-linecap="butt" /><path d="M0 279 L119 287.5 L306 299 L374 316 L435 330 L622 335 L700 360" fill="none" stroke="#f4e3a4" stroke-width="4.8" stroke-linejoin="round" stroke-linecap="butt" /><path d="M41 0 L44 462 L68 503 L68 574.5 L54.6 615.5 L64.8 683.7 L88.7 752 L90.4 803 L80 833.8 L82 925" fill="none" stroke="#f4e3a4" stroke-width="4.8" stroke-linejoin="round" stroke-linecap="butt" /><path d="M247 0 L244 462" fill="none" stroke="#f4e3a4" stroke-width="4.8" stroke-linejoin="round" stroke-linecap="butt" /><path d="M473 0 L474 925" fill="none" stroke="#f4e3a4" stroke-width="4.8" stroke-linejoin="round" stroke-linecap="butt" /><path d="M584.5 0 L585 925" fill="none" stroke="#f4e3a4" stroke-width="4.8" stroke-linejoin="round" stroke-linecap="butt" /><path d="M41 177 L68 238 L136 296 L238 350 L293 372.5 L340 391 L400 420" fill="none" stroke="#f4e3a4" stroke-width="4.8" stroke-linejoin="round" stroke-linecap="butt" /><path d="M44 462 L88 429 L136 405 L204 388 L293 374 L400 360" fill="none" stroke="#f4e3a4" stroke-width="4.8" stroke-linejoin="round" stroke-linecap="butt" /><path d="M211.5 462 L184 530 L174 574.5 L174 639 L157 700.7 L153.5 752 L160 820 L158.6 925" fill="none" stroke="#f4e3a4" stroke-width="4.8" stroke-linejoin="round" stroke-linecap="butt" /><path d="M305 470 L305 673.5 L327.4 711 L334 925" fill="none" stroke="#f4e3a4" stroke-width="4.8" stroke-linejoin="round" stroke-linecap="butt" /><path d="M0 581 L34 571 L194 571 L303.5 653" fill="none" stroke="#f4e3a4" stroke-width="4.8" stroke-linejoin="round" stroke-linecap="butt" /><path d="M305 654.7 L1244 654.7" fill="none" stroke="#f4e3a4" stroke-width="4.8" stroke-linejoin="round" stroke-linecap="butt" /><path d="M382 656 L334 707.5" fill="none" stroke="#f4e3a4" stroke-width="4.8" stroke-linejoin="round" stroke-linecap="butt" /><path d="M0 822 L78 833.8 L136 832 L177 823.5 L622 822 L1150.6 822 L1244 833.7" fill="none" stroke="#f4e3a4" stroke-width="4.8" stroke-linejoin="round" stroke-linecap="butt" /><path d="M622 20 L673 68 L707 102 L758 136 L782 143 L812.5 153 L846.6 177 L857 238" fill="none" stroke="#f4e3a4" stroke-width="4.8" stroke-linejoin="round" stroke-linecap="butt" /><path d="M819 0 L792 37 L788.7 112 L785 143 L782 204" fill="none" stroke="#f4e3a4" stroke-width="4.8" stroke-linejoin="round" stroke-linecap="butt" /><path d="M1023.5 326.6 L1047 296 L1098 258.6 L1132 231 L1193.6 224.6 L1244 238" fill="none" stroke="#f4e3a4" stroke-width="4.8" stroke-linejoin="round" stroke-linecap="butt" /><path d="M1132 231 L1200 153 L1221 112 L1244 85" fill="none" stroke="#f4e3a4" stroke-width="4.8" stroke-linejoin="round" stroke-linecap="butt" /><path d="M1204.6 140 L1164 300 L1117 386" fill="none" stroke="#f4e3a4" stroke-width="4.8" stroke-linejoin="round" stroke-linecap="butt" /><path d="M0 35.7 L622 35.7 L700 60" fill="none" stroke="#fef3b8" stroke-width="3.6" stroke-linejoin="round" stroke-linecap="butt" /><path d="M0 221 L68 243 L143 255 L245 260 L622 260" fill="none" stroke="#fef3b8" stroke-width="3.6" stroke-linejoin="round" stroke-linecap="butt" /><path d="M0 279 L119 287.5 L306 299 L374 316 L435 330 L622 335 L700 360" fill="none" stroke="#fef3b8" stroke-width="3.6" stroke-linejoin="round" stroke-linecap="butt" /><path d="M41 0 L44 462 L68 503 L68 574.5 L54.6 615.5 L64.8 683.7 L88.7 752 L90.4 803 L80 833.8 L82 925" fill="none" stroke="#fef3b8" stroke-width="3.6" stroke-linejoin="round" stroke-linecap="butt" /><path d="M247 0 L244 462" fill="none" stroke="#fef3b8" stroke-width="3.6" stroke-linejoin="round" stroke-linecap="butt" /><path d="M473 0 L474 925" fill="none" stroke="#fef3b8" stroke-width="3.6" stroke-linejoin="round" stroke-linecap="butt" /><path d="M584.5 0 L585 925" fill="none" stroke="#fef3b8" stroke-width="3.6" stroke-linejoin="round" stroke-linecap="butt" /><path d="M41 177 L68 238 L136 296 L238 350 L293 372.5 L340 391 L400 420" fill="none" stroke="#fef3b8" stroke-width="3.6" stroke-linejoin="round" stroke-linecap="butt" /><path d="M44 462 L88 429 L136 405 L204 388 L293 374 L400 360" fill="none" stroke="#fef3b8" stroke-width="3.6" stroke-linejoin="round" stroke-linecap="butt" /><path d="M211.5 462 L184 530 L174 574.5 L174 639 L157 700.7 L153.5 752 L160 820 L158.6 925" fill="none" stroke="#fef3b8" stroke-width="3.6" stroke-linejoin="round" stroke-linecap="butt" /><path d="M305 470 L305 673.5 L327.4 711 L334 925" fill="none" stroke="#fef3b8" stroke-width="3.6" stroke-linejoin="round" stroke-linecap="butt" /><path d="M0 581 L34 571 L194 571 L303.5 653" fill="none" stroke="#fef3b8" stroke-width="3.6" stroke-linejoin="round" stroke-linecap="butt" /><path d="M305 654.7 L1244 654.7" fill="none" stroke="#fef3b8" stroke-width="3.6" stroke-linejoin="round" stroke-linecap="butt" /><path d="M382 656 L334 707.5" fill="none" stroke="#fef3b8" stroke-width="3.6" stroke-linejoin="round" stroke-linecap="butt" /><path d="M0 822 L78 833.8 L136 832 L177 823.5 L622 822 L1150.6 822 L1244 833.7" fill="none" stroke="#fef3b8" stroke-width="3.6" stroke-linejoin="round" stroke-linecap="butt" /><path d="M622 20 L673 68 L707 102 L758 136 L782 143 L812.5 153 L846.6 177 L857 238" fill="none" stroke="#fef3b8" stroke-width="3.6" stroke-linejoin="round" stroke-linecap="butt" /><path d="M819 0 L792 37 L788.7 112 L785 143 L782 204" fill="none" stroke="#fef3b8" stroke-width="3.6" stroke-linejoin="round" stroke-linecap="butt" /><path d="M1023.5 326.6 L1047 296 L1098 258.6 L1132 231 L1193.6 224.6 L1244 238" fill="none" stroke="#fef3b8" stroke-width="3.6" stroke-linejoin="round" stroke-linecap="butt" /><path d="M1132 231 L1200 153 L1221 112 L1244 85" fill="none" stroke="#fef3b8" stroke-width="3.6" stroke-linejoin="round" stroke-linecap="butt" /><path d="M1204.6 140 L1164 300 L1117 386" fill="none" stroke="#fef3b8" stroke-width="3.6" stroke-linejoin="round" stroke-linecap="butt" /><path d="M1000 328 L1023.5 326.6 L1061 309.6 L1081 304.5 L1125.6 318 L1153 314.7" fill="none" stroke="#f2d188" stroke-width="13" stroke-linejoin="round" stroke-linecap="butt" /><path d="M1000 328 L1023.5 326.6 L1061 309.6 L1081 304.5 L1125.6 318 L1153 314.7" fill="none" stroke="#fbe4a0" stroke-width="11.5" stroke-linejoin="round" stroke-linecap="butt" /><path d="M449 0 L483 27 L500 54 L531 82 L572 112 L622 136 L666 146 L724 173.5 L782 201 L833 224.5 L857 245 L874 272 L904 299 L942 316 L996 328 L1023.5 326.6 L1061 309.6 L1081 304.5 L1125.6 318 L1153 314.7 L1183.4 308 L1244 306" fill="none" stroke="#f2d188" stroke-width="8.4" stroke-linejoin="round" stroke-linecap="butt" /><path d="M654 470 L654 440 L717 386 L758 360.7 L799 326.6 L833 292.6 L860 251.8 L880.6 238 L921.4 217.8 L948.6 190.5 L975.9 149.7 L999.7 119 L1030.3 91.9 L1061 76.6 L1098.4 66.3 L1122 44 L1132.4 0" fill="none" stroke="#f2d188" stroke-width="8.4" stroke-linejoin="round" stroke-linecap="butt" /><path d="M890.8 0 L914.6 34 L948.6 64.6 L989.5 90 L1010 102 L1037 136 L1050.7 177 L1064.3 211 L1071 255 L1081.3 304.5 L1084.7 340 L1083 386 L1083 470" fill="none" stroke="#f2d188" stroke-width="8.4" stroke-linejoin="round" stroke-linecap="butt" /><path d="M996 328 L1020 337 L1030 360.7 L1033.7 386 L1036 470" fill="none" stroke="#f2d188" stroke-width="8.4" stroke-linejoin="round" stroke-linecap="butt" /><path d="M0 464.4 L12 456 L20.4 453 L43.3 455.5 L152.8 478.4 L305.7 469.5 L445.7 450.4 L652 450.4 L720 452 L900 440 L1084 380" fill="none" stroke="#f2d188" stroke-width="8.4" stroke-linejoin="round" stroke-linecap="butt" /><path d="M654.4 452 L654.4 925" fill="none" stroke="#f2d188" stroke-width="8.4" stroke-linejoin="round" stroke-linecap="butt" /><path d="M449 0 L483 27 L500 54 L531 82 L572 112 L622 136 L666 146 L724 173.5 L782 201 L833 224.5 L857 245 L874 272 L904 299 L942 316 L996 328 L1023.5 326.6 L1061 309.6 L1081 304.5 L1125.6 318 L1153 314.7 L1183.4 308 L1244 306" fill="none" stroke="#fbe4a0" stroke-width="6.8" stroke-linejoin="round" stroke-linecap="butt" /><path d="M654 470 L654 440 L717 386 L758 360.7 L799 326.6 L833 292.6 L860 251.8 L880.6 238 L921.4 217.8 L948.6 190.5 L975.9 149.7 L999.7 119 L1030.3 91.9 L1061 76.6 L1098.4 66.3 L1122 44 L1132.4 0" fill="none" stroke="#fbe4a0" stroke-width="6.8" stroke-linejoin="round" stroke-linecap="butt" /><path d="M890.8 0 L914.6 34 L948.6 64.6 L989.5 90 L1010 102 L1037 136 L1050.7 177 L1064.3 211 L1071 255 L1081.3 304.5 L1084.7 340 L1083 386 L1083 470" fill="none" stroke="#fbe4a0" stroke-width="6.8" stroke-linejoin="round" stroke-linecap="butt" /><path d="M996 328 L1020 337 L1030 360.7 L1033.7 386 L1036 470" fill="none" stroke="#fbe4a0" stroke-width="6.8" stroke-linejoin="round" stroke-linecap="butt" /><path d="M0 464.4 L12 456 L20.4 453 L43.3 455.5 L152.8 478.4 L305.7 469.5 L445.7 450.4 L652 450.4 L720 452 L900 440 L1084 380" fill="none" stroke="#fbe4a0" stroke-width="6.8" stroke-linejoin="round" stroke-linecap="butt" /><path d="M654.4 452 L654.4 925" fill="none" stroke="#fbe4a0" stroke-width="6.8" stroke-linejoin="round" stroke-linecap="butt" /><g font-family="Liberation Sans,sans-serif"><text x="91" y="30" font-size="15" fill="#2a4363" stroke="#2a4363" stroke-width="0.350" text-anchor="middle" letter-spacing="0.97">est Hollywood</text><text x="897.6" y="332.5" font-size="21.5" fill="#2a4363" stroke="#2a4363" stroke-width="0.350" text-anchor="middle" letter-spacing="0.33">LOS ANGELES</text><text x="1010" y="894" font-size="14.5" fill="#2a4363" stroke="#2a4363" stroke-width="0.350" text-anchor="middle" letter-spacing="0.93">Huntington Park</text><text x="98" y="473" font-size="10.5" font-weight="400" fill="#4b566b" opacity="1" text-anchor="middle" letter-spacing="0.13" transform="rotate(10 98 473)" style="paint-order:stroke;stroke:#fbf6ec;stroke-width:2px">Santa Monica Freeway</text><text x="385" y="461" font-size="10.5" font-weight="400" fill="#4b566b" opacity="1" text-anchor="middle" letter-spacing="0.13" transform="rotate(-7 385 461)" style="paint-order:stroke;stroke:#fbf6ec;stroke-width:2px">Santa Monica Freeway</text><text x="617" y="128" font-size="10.5" font-weight="400" fill="#4b566b" opacity="1" text-anchor="middle" letter-spacing="0.02" transform="rotate(22 617 128)" style="paint-order:stroke;stroke:#fbf6ec;stroke-width:2px">Hollywood Freeway</text><text x="836" y="281" font-size="10.5" font-weight="400" fill="#4b566b" opacity="1" text-anchor="middle" letter-spacing="0.05" transform="rotate(-45 836 281)" style="paint-order:stroke;stroke:#fbf6ec;stroke-width:2px">Harbor Freeway</text><text x="947" y="185" font-size="10.5" font-weight="400" fill="#4b566b" opacity="1" text-anchor="middle" letter-spacing="0.16" transform="rotate(-50 947 185)" style="paint-order:stroke;stroke:#fbf6ec;stroke-width:2px">Arroyo Seco Parkway</text><text x="1027" y="140" font-size="10.5" font-weight="400" fill="#4b566b" opacity="1" text-anchor="middle" letter-spacing="0.18" transform="rotate(68 1027 140)" style="paint-order:stroke;stroke:#fbf6ec;stroke-width:2px">Golden State Freeway</text><text x="1208" y="307" font-size="10.5" font-weight="400" fill="#4b566b" opacity="1" text-anchor="middle" letter-spacing="0.22" transform="rotate(2 1208 307)" style="paint-order:stroke;stroke:#fbf6ec;stroke-width:2px">I-10 Metro Exp</text><text x="651" y="749" font-size="10.5" font-weight="400" fill="#4b566b" opacity="1" text-anchor="middle" letter-spacing="0.87" transform="rotate(90 651 749)" style="paint-order:stroke;stroke:#fbf6ec;stroke-width:2px">Harbor Transitway</text><text x="651" y="918" font-size="10.5" font-weight="400" fill="#4b566b" opacity="1" text-anchor="middle" letter-spacing="0.03" transform="rotate(90 651 918)" style="paint-order:stroke;stroke:#fbf6ec;stroke-width:2px">Har</text><text x="1029" y="369" font-size="10.5" font-weight="400" fill="#4b566b" opacity="1" text-anchor="middle" letter-spacing="-0.29" transform="rotate(82 1029 369)" style="paint-order:stroke;stroke:#fbf6ec;stroke-width:2px">Santa</text><text x="735" y="377" font-size="10.5" font-weight="400" fill="#4b566b" opacity="1" text-anchor="middle" letter-spacing="0.03" transform="rotate(-33 735 377)" style="paint-order:stroke;stroke:#fbf6ec;stroke-width:2px">reeway</text><text x="896" y="12" font-size="10.5" font-weight="400" fill="#4b566b" opacity="1" text-anchor="middle" letter-spacing="-0.47" transform="rotate(60 896 12)" style="paint-order:stroke;stroke:#fbf6ec;stroke-width:2px">eeway</text></g></svg>
<div class="b" style="left:310px;top:166px;width:32px;height:65px;background:#fff;border-radius:16px;box-shadow:0 2px 5px rgba(0,0,0,0.35);"></div>
<svg class="i" style="left:315.50px;top:171.00px;width:22px;height:22px;" viewBox="0 0 24 24"><path fill="#555" fill-rule="evenodd" d="M19 13h-6v6h-2v-6H5v-2h6V5h2v6h6v2z"/></svg>
<div class="b" style="left:319px;top:214px;width:15px;height:2px;background:#555;"></div>
<div class="b" style="left:310px;top:243.5px;width:32px;height:32px;background:#fff;border-radius:16px;box-shadow:0 2px 5px rgba(0,0,0,0.35);"></div>
<svg class="i" style="left:316px;top:249px;width:21px;height:21px" viewBox="0 0 24 24"><path d="M12 2.500L2.500 8.500 12 14.500l9.500-6z" fill="#555"/><path d="M4 12.200L2.500 13.200 12 19.200l9.500-6-1.500-1L12 17.200z" fill="#555"/><path d="M4 16.400L2.500 17.400 12 23.400l9.500-6-1.500-1L12 21.400z" fill="#555"/></svg>
<svg class="i" style="left:1505.00px;top:168.50px;width:24px;height:24px;" viewBox="0 0 24 24"><path fill="rgba(0,0,0,0.42)" fill-rule="evenodd" d="M7 14H5v5h5v-2H7v-3zm-2-4h2V7h3V5H5v5zm12 7h-3v2h5v-5h-2v3zM14 5v2h3v3h2V5h-5z"/></svg>
<div class="b" style="left:586px;top:618px;width:44px;height:44px;background:rgba(255,60,60,0.45);border-radius:22px;"></div>
<div class="b" style="left:592px;top:624px;width:32px;height:32px;background:#f01010;border-radius:16px;"></div>
<div class="t" style="left:604.38px;top:634.00px;font-size:13px;line-height:13px;color:#4a1a2e;">3</div>
<div class="b" style="left:907px;top:599px;width:44px;height:44px;background:rgba(255,60,60,0.45);border-radius:22px;"></div>
<div class="b" style="left:913px;top:605px;width:32px;height:32px;background:#f01010;border-radius:16px;"></div>
<div class="t" style="left:925.38px;top:615.00px;font-size:13px;line-height:13px;color:#4a1a2e;">2</div>
<div class="t" style="left:308.00px;top:1106.60px;font-size:17.6px;line-height:17.6px;color:rgba(0,0,0,0.87);letter-spacing:0.361px;-webkit-text-stroke:0.6px rgba(0,0,0,0.87);">Filter alarms</div>
<svg class="i" style="left:416px;top:1106px;width:20px;height:20px" viewBox="0 0 20 20"><path d="M4.500 7.500L10 13l5.500-5.500" fill="none" stroke="#444" stroke-width="1.700"/></svg>
<div class="t" style="left:1337.00px;top:1106.96px;font-size:15.4px;line-height:15.4px;color:#4a4adf;letter-spacing:0.450px;-webkit-text-stroke:0.5px #4a4adf;">Disable all</div>
<div class="b" style="left:1426.5px;top:1096px;width:106.5px;height:39.5px;border:1px solid rgba(0,0,0,0.14);border-radius:4px;"></div>
<div class="t" style="left:1444.00px;top:1106.96px;font-size:15.4px;line-height:15.4px;color:#4a4adf;letter-spacing:0.336px;-webkit-text-stroke:0.5px #4a4adf;">Enable all</div>
<div class="b" style="left:306px;top:1158px;width:609px;height:169.5px;background:rgba(0,0,0,0.035);border-radius:9px;"></div>
<div class="b" style="left:928.5px;top:1158px;width:608.5px;height:169.5px;background:rgba(0,0,0,0.035);border-radius:9px;"></div>
<div class="t" style="left:350.00px;top:1182.96px;font-size:15.4px;line-height:15.4px;color:rgba(0,0,0,0.87);letter-spacing:0.258px;">No alarms</div>
<div class="t" style="left:972.00px;top:1182.96px;font-size:15.4px;line-height:15.4px;color:rgba(0,0,0,0.87);letter-spacing:0.296px;">Low temperature</div>
<div class="b" style="left:860px;top:1177.2px;width:46.5px;height:26.6px;background:#9999fd;border-radius:13.300px;"></div>
<div class="b" style="left:882px;top:1179.2px;width:22.6px;height:22.6px;background:#fff;border-radius:11.300px;box-shadow:0 1px 2px rgba(0,0,0,0.35);"></div>
<div class="b" style="left:1482.5px;top:1177.2px;width:46.5px;height:26.6px;background:#9999fd;border-radius:13.300px;"></div>
<div class="b" style="left:1504.5px;top:1179.2px;width:22.6px;height:22.6px;background:#fff;border-radius:11.300px;box-shadow:0 1px 2px rgba(0,0,0,0.35);"></div>
<div class="t" style="left:350.00px;top:1239.96px;font-size:15.4px;line-height:15.4px;color:rgba(0,0,0,0.87);letter-spacing:0.212px;">Low remaning level</div>
<div class="t" style="left:972.00px;top:1239.96px;font-size:15.4px;line-height:15.4px;color:rgba(0,0,0,0.87);letter-spacing:0.282px;">High temperature</div>
<div class="b" style="left:860px;top:1234.2px;width:46.5px;height:26.6px;background:#9999fd;border-radius:13.300px;"></div>
<div class="b" style="left:882px;top:1236.2px;width:22.6px;height:22.6px;background:#fff;border-radius:11.300px;box-shadow:0 1px 2px rgba(0,0,0,0.35);"></div>
<div class="b" style="left:1482.5px;top:1234.2px;width:46.5px;height:26.6px;background:#9999fd;border-radius:13.300px;"></div>
<div class="b" style="left:1504.5px;top:1236.2px;width:22.6px;height:22.6px;background:#fff;border-radius:11.300px;box-shadow:0 1px 2px rgba(0,0,0,0.35);"></div>
<div class="t" style="left:350.00px;top:1296.96px;font-size:15.4px;line-height:15.4px;color:rgba(0,0,0,0.87);letter-spacing:0.308px;">Low battery</div>
<div class="t" style="left:972.00px;top:1296.96px;font-size:15.4px;line-height:15.4px;color:rgba(0,0,0,0.87);letter-spacing:0.396px;">Offline</div>
<div class="b" style="left:860px;top:1291.2px;width:46.5px;height:26.6px;background:#9999fd;border-radius:13.300px;"></div>
<div class="b" style="left:882px;top:1293.2px;width:22.6px;height:22.6px;background:#fff;border-radius:11.300px;box-shadow:0 1px 2px rgba(0,0,0,0.35);"></div>
<div class="b" style="left:1482.5px;top:1291.2px;width:46.5px;height:26.6px;background:#9999fd;border-radius:13.300px;"></div>
<div class="b" style="left:1504.5px;top:1293.2px;width:22.6px;height:22.6px;background:#fff;border-radius:11.300px;box-shadow:0 1px 2px rgba(0,0,0,0.35);"></div>
<svg class="i" style="left:316px;top:1178.500px;width:24px;height:24px" viewBox="0 0 24 24"><path d="M3.500 13l5.500 5.500L21 6.500" fill="none" stroke="#111" stroke-width="2.700"/></svg>
<svg class="i" style="left:317px;top:1236px;width:24px;height:24px" viewBox="0 0 24 24"><path d="M2.500 3v15.500a2 2 0 0 0 2 2h7.500a2 2 0 0 0 2-2V3" fill="none" stroke="#111" stroke-width="2.300"/><path d="M8.200 9.500c-1.500 2-2.700 3.500-2.700 5a2.700 2.700 0 0 0 5.400 0c0-1.500-1.200-3-2.700-5z" fill="#111"/><path d="M18 8h2.300v6.500H18zM18 16.300h2.300v2.400H18z" fill="#111"/></svg>
<svg class="i" style="left:316px;top:1292px;width:25px;height:25px" viewBox="0 0 25 25"><path d="M4.500 1h5.500v2h1.800a1.500 1.500 0 0 1 1.500 1.500V22a1.500 1.500 0 0 1-1.500 1.500H2.700A1.500 1.500 0 0 1 1.200 22V4.500A1.500 1.500 0 0 1 2.700 3h1.800zM3.400 5.200V21.300h7.700V5.200z" fill="#111" fill-rule="evenodd"/><path d="M4.500 16.500h5.500v3.500H4.500z" fill="#111"/><path d="M20.500 4l-5.500 10h3.400l-1.800 8.500 6.600-12h-3.800z" fill="#111"/></svg>
<svg class="i" style="left:938px;top:1178.5px;width:24px;height:24px" viewBox="0 0 24 24"><path d="M9 1.500a2.900 2.900 0 0 0-2.900 2.900v8.300a5.200 5.200 0 1 0 5.800 0V4.400A2.900 2.900 0 0 0 9 1.500z" fill="#111"/><path d="M8.100 4.500h1.800v6.500H8.100z" fill="#b5b5b5"/><path d="M17 6.500h2.300V13H17zM17 14.800h2.300v2.400H17z" fill="#111"/></svg>
<svg class="i" style="left:938px;top:1235.5px;width:24px;height:24px" viewBox="0 0 24 24"><path d="M9 1.500a2.900 2.900 0 0 0-2.900 2.900v8.300a5.200 5.200 0 1 0 5.800 0V4.400A2.900 2.900 0 0 0 9 1.500z" fill="#111"/><path d="M8.100 4.500h1.800v6.500H8.100z" fill="#b5b5b5"/><path d="M17 6.500h2.300V13H17zM17 14.800h2.300v2.400H17z" fill="#111"/></svg>
<svg class="i" style="left:937px;top:1291.500px;width:26px;height:26px" viewBox="-1 0 26 26"><path d="M0.75 8.93A16.5 16.5 0 0 1 8.60 4.85M15.40 4.85A16.5 16.5 0 0 1 23.25 8.93M4.16 12.59A11.5 11.5 0 0 1 8.60 10.01M15.40 10.01A11.5 11.5 0 0 1 19.84 12.59M7.43 16.10A6.7 6.7 0 0 1 8.60 15.23M15.40 15.23A6.7 6.7 0 0 1 16.57 16.10" fill="none" stroke="#111" stroke-width="2.500" stroke-linecap="round"/><path d="M10.600 3.200h2.800l-.500 13.300h-1.800z" fill="#111"/><circle cx="12" cy="21" r="2.100" fill="#111"/></svg>
<div class="b" style="left:1568px;top:148px;width:974px;height:604px;background:#fff;border-radius:10px;box-shadow:0 1px 4px rgba(0,0,0,0.03);"></div>
<div class="t" style="left:1593.00px;top:172.10px;font-size:17.6px;line-height:17.6px;color:rgba(0,0,0,0.87);letter-spacing:0.105px;-webkit-text-stroke:0.5px rgba(0,0,0,0.87);">Tanks</div>
<svg class="i" style="left:2363.80px;top:169.00px;width:22px;height:22px;" viewBox="0 0 24 24"><path fill="rgba(0,0,0,0.41)" fill-rule="evenodd" d="M19 13h-6v6h-2v-6H5v-2h6V5h2v6h6v2z"/></svg>
<svg class="i" style="left:2399.40px;top:169.00px;width:22px;height:22px;" viewBox="0 0 24 24"><path fill="rgba(0,0,0,0.41)" fill-rule="evenodd" d="M9 21c0 .55.45 1 1 1h4c.55 0 1-.45 1-1v-1H9v1zm3-19C8.14 2 5 5.14 5 9c0 2.38 1.19 4.47 3 5.74V17c0 .55.45 1 1 1h6c.55 0 1-.45 1-1v-2.260c1.81-1.27 3-3.36 3-5.74 0-3.86-3.140-7-7-7z"/></svg>
<svg class="i" style="left:2433.80px;top:169.00px;width:22px;height:22px;" viewBox="0 0 24 24"><path fill="rgba(0,0,0,0.41)" fill-rule="evenodd" d="M15.5 14h-.79l-.28-.27C15.41 12.59 16 11.11 16 9.5 16 5.91 13.09 3 9.5 3S3 5.91 3 9.5 5.91 16 9.5 16c1.61 0 3.09-.59 4.23-1.57l.27.28v.79l5 4.99L20.49 19l-4.99-5zm-6 0C7.01 14 5 11.99 5 9.5S7.01 5 9.5 5 14 7.01 14 9.5 11.99 14 9.5 14z"/></svg>
<svg class="i" style="left:2469.70px;top:169.00px;width:22px;height:22px;" viewBox="0 0 24 24"><path fill="rgba(0,0,0,0.41)" fill-rule="evenodd" d="M14 2H6c-1.1 0-2 .9-2 2v16c0 1.1.9 2 2 2h12c1.1 0 2-.9 2-2V8l-6-6zm-1 7V3.500L18.500 9H13zM11.800 12H18V18.200L15.900 16.100 11.400 20.600 9.400 18.600 13.900 14.100z"/></svg>
<svg class="i" style="left:2504.90px;top:169.00px;width:22px;height:22px;" viewBox="0 0 24 24"><path fill="rgba(0,0,0,0.41)" fill-rule="evenodd" d="M7 14H5v5h5v-2H7v-3zm-2-4h2V7h3V5H5v5zm12 7h-3v2h5v-5h-2v3zM14 5v2h3v3h2V5h-5z"/></svg>
<div class="t" style="left:1590.00px;top:222.53px;font-size:13.2px;line-height:13.2px;color:rgba(0,0,0,0.36);letter-spacing:0.029px;-webkit-text-stroke:0.55px rgba(0,0,0,0.36);">Tank</div>
<div class="t" style="left:1680.00px;top:222.53px;font-size:13.2px;line-height:13.2px;color:rgba(0,0,0,0.36);letter-spacing:-0.348px;-webkit-text-stroke:0.55px rgba(0,0,0,0.36);">Remaining, %</div>
<div class="t" style="left:2012.70px;top:222.53px;font-size:13.2px;line-height:13.2px;color:rgba(0,0,0,0.36);letter-spacing:0.081px;-webkit-text-stroke:0.55px rgba(0,0,0,0.36);">Temperature</div>
<div class="t" style="left:2152.20px;top:222.53px;font-size:13.2px;line-height:13.2px;color:rgba(0,0,0,0.36);letter-spacing:0.055px;-webkit-text-stroke:0.55px rgba(0,0,0,0.36);">Battery</div>
<div class="t" style="left:2248.30px;top:222.53px;font-size:13.2px;line-height:13.2px;color:rgba(0,0,0,0.36);letter-spacing:-0.008px;-webkit-text-stroke:0.55px rgba(0,0,0,0.36);">Connection</div>
<div class="b" style="left:1577px;top:260px;width:950px;height:1px;background:rgba(0,0,0,0.12);"></div>
<div class="b" style="left:2527.6px;top:200px;width:5px;height:514px;background:rgba(0,0,0,0.2);"></div>
<div class="b" style="left:1568px;top:261px;width:974px;height:483px;overflow:hidden;">
<div class="t" style="left:22.00px;top:9.96px;font-size:15.4px;line-height:15.4px;color:rgba(0,0,0,0.76);letter-spacing:-0.508px;">Tank</div>
<div class="t" style="left:22.00px;top:31.96px;font-size:15.4px;line-height:15.4px;color:rgba(0,0,0,0.76);letter-spacing:0.096px;">1133</div>
<div class="t" style="left:116.20px;top:20.96px;font-size:15.4px;line-height:15.4px;color:#dc2530;font-weight:700;letter-spacing:-0.184px;">8% (13497L)</div>
<div class="b" style="left:290.79999999999995px;top:20.0px;width:110.2px;height:17.5px;background:rgba(209,39,48,0.06);border-radius:5px;overflow:hidden;"></div>
<div class="b" style="left:290.79999999999995px;top:20.0px;width:8.816px;height:17.5px;background:#dc2530;border-radius:5px 0 0 5px;"></div>
<div class="t" style="left:444.70px;top:20.96px;font-size:15.4px;line-height:15.4px;color:rgba(0,0,0,0.76);">25 °C</div>
<div class="t" style="left:584.20px;top:20.96px;font-size:15.4px;line-height:15.4px;color:rgba(0,0,0,0.76);">65%</div>
<div class="b" style="left:680.3000000000002px;top:13.5px;width:66px;height:30px;background:rgba(209,39,48,0.1);border-radius:8px;"></div>
<div class="t" style="left:689.30px;top:20.96px;font-size:15.4px;line-height:15.4px;color:#dc2530;font-weight:700;letter-spacing:-0.252px;">Offline</div>
<svg class="i" style="left:853.80px;top:15.30px;width:26.4px;height:26.4px;" viewBox="0 0 24 24"><path fill="rgba(0,0,0,0.41)" fill-rule="evenodd" d="M3 17.25V21h3.75L17.81 9.94l-3.75-3.75L3 17.25zM20.71 7.04c.39-.39.39-1.02 0-1.41l-2.34-2.34c-.39-.39-1.02-.39-1.41 0l-1.83 1.83 3.75 3.75 1.830-1.830z"/></svg>
<svg class="i" style="left:906.50px;top:15.30px;width:26.4px;height:26.4px;" viewBox="0 0 24 24"><path fill="rgba(0,0,0,0.41)" fill-rule="evenodd" d="M6 19c0 1.1.9 2 2 2h8c1.1 0 2-.9 2-2V7H6v12zM19 4h-3.5l-1-1h-5l-1 1H5v2h14V4z"/></svg>
<div class="t" style="left:22.00px;top:67.08px;font-size:15.4px;line-height:15.4px;color:rgba(0,0,0,0.76);letter-spacing:-0.508px;">Tank</div>
<div class="t" style="left:22.00px;top:89.08px;font-size:15.4px;line-height:15.4px;color:rgba(0,0,0,0.76);letter-spacing:-0.190px;">1491</div>
<div class="t" style="left:116.20px;top:78.08px;font-size:15.4px;line-height:15.4px;color:rgba(0,0,0,0.76);letter-spacing:-0.196px;">43% (22574L)</div>
<div class="b" style="left:290.79999999999995px;top:77.12px;width:110.2px;height:17.5px;background:#e9e7fb;border-radius:5px;overflow:hidden;"></div>
<div class="b" style="left:290.79999999999995px;top:77.12px;width:47.386px;height:17.5px;background:#b9b9fa;border-radius:5px 0 0 5px;"></div>
<div class="t" style="left:444.70px;top:78.08px;font-size:15.4px;line-height:15.4px;color:rgba(0,0,0,0.76);">6 °C</div>
<div class="t" style="left:584.20px;top:78.08px;font-size:15.4px;line-height:15.4px;color:rgba(0,0,0,0.76);">43%</div>
<div class="b" style="left:680.3000000000002px;top:70.62px;width:66px;height:30px;background:rgba(209,39,48,0.1);border-radius:8px;"></div>
<div class="t" style="left:689.30px;top:78.08px;font-size:15.4px;line-height:15.4px;color:#dc2530;font-weight:700;letter-spacing:-0.252px;">Offline</div>
<svg class="i" style="left:853.80px;top:72.42px;width:26.4px;height:26.4px;" viewBox="0 0 24 24"><path fill="rgba(0,0,0,0.41)" fill-rule="evenodd" d="M3 17.25V21h3.75L17.81 9.94l-3.75-3.75L3 17.25zM20.71 7.04c.39-.39.39-1.02 0-1.41l-2.34-2.34c-.39-.39-1.02-.39-1.41 0l-1.83 1.83 3.75 3.75 1.830-1.830z"/></svg>
<svg class="i" style="left:906.50px;top:72.42px;width:26.4px;height:26.4px;" viewBox="0 0 24 24"><path fill="rgba(0,0,0,0.41)" fill-rule="evenodd" d="M6 19c0 1.1.9 2 2 2h8c1.1 0 2-.9 2-2V7H6v12zM19 4h-3.5l-1-1h-5l-1 1H5v2h14V4z"/></svg>
<div class="t" style="left:22.00px;top:124.20px;font-size:15.4px;line-height:15.4px;color:rgba(0,0,0,0.76);letter-spacing:-0.508px;">Tank</div>
<div class="t" style="left:22.00px;top:146.20px;font-size:15.4px;line-height:15.4px;color:rgba(0,0,0,0.76);letter-spacing:-0.190px;">1305</div>
<div class="t" style="left:116.20px;top:135.20px;font-size:15.4px;line-height:15.4px;color:rgba(0,0,0,0.76);letter-spacing:-0.196px;">82% (23417L)</div>
<div class="b" style="left:290.79999999999995px;top:134.24px;width:110.2px;height:17.5px;background:#e9e7fb;border-radius:5px;overflow:hidden;"></div>
<div class="b" style="left:290.79999999999995px;top:134.24px;width:90.36399999999999px;height:17.5px;background:#b9b9fa;border-radius:5px 0 0 5px;"></div>
<div class="t" style="left:444.70px;top:135.20px;font-size:15.4px;line-height:15.4px;color:rgba(0,0,0,0.76);">7 °C</div>
<div class="t" style="left:584.20px;top:135.20px;font-size:15.4px;line-height:15.4px;color:rgba(0,0,0,0.76);">53%</div>
<div class="b" style="left:680.3000000000002px;top:127.74000000000001px;width:66px;height:30px;background:rgba(209,39,48,0.1);border-radius:8px;"></div>
<div class="t" style="left:689.30px;top:135.20px;font-size:15.4px;line-height:15.4px;color:#dc2530;font-weight:700;letter-spacing:-0.252px;">Offline</div>
<svg class="i" style="left:853.80px;top:129.54px;width:26.4px;height:26.4px;" viewBox="0 0 24 24"><path fill="rgba(0,0,0,0.41)" fill-rule="evenodd" d="M3 17.25V21h3.75L17.81 9.94l-3.75-3.75L3 17.25zM20.71 7.04c.39-.39.39-1.02 0-1.41l-2.34-2.34c-.39-.39-1.02-.39-1.41 0l-1.83 1.83 3.75 3.75 1.830-1.830z"/></svg>
<svg class="i" style="left:906.50px;top:129.54px;width:26.4px;height:26.4px;" viewBox="0 0 24 24"><path fill="rgba(0,0,0,0.41)" fill-rule="evenodd" d="M6 19c0 1.1.9 2 2 2h8c1.1 0 2-.9 2-2V7H6v12zM19 4h-3.5l-1-1h-5l-1 1H5v2h14V4z"/></svg>
<div class="t" style="left:22.00px;top:181.32px;font-size:15.4px;line-height:15.4px;color:rgba(0,0,0,0.76);letter-spacing:-0.508px;">Tank</div>
<div class="t" style="left:22.00px;top:203.32px;font-size:15.4px;line-height:15.4px;color:rgba(0,0,0,0.76);letter-spacing:-0.190px;">1273</div>
<div class="t" style="left:116.20px;top:192.32px;font-size:15.4px;line-height:15.4px;color:rgba(0,0,0,0.76);letter-spacing:-0.129px;">90% (8413gal)</div>
<div class="b" style="left:290.79999999999995px;top:191.36px;width:110.2px;height:17.5px;background:#e9e7fb;border-radius:5px;overflow:hidden;"></div>
<div class="b" style="left:290.79999999999995px;top:191.36px;width:99.18px;height:17.5px;background:#b9b9fa;border-radius:5px 0 0 5px;"></div>
<div class="t" style="left:444.70px;top:192.32px;font-size:15.4px;line-height:15.4px;color:rgba(0,0,0,0.76);">25 °C</div>
<div class="t" style="left:584.20px;top:192.32px;font-size:15.4px;line-height:15.4px;color:rgba(0,0,0,0.76);">25%</div>
<div class="b" style="left:680.3000000000002px;top:184.86px;width:66px;height:30px;background:rgba(209,39,48,0.1);border-radius:8px;"></div>
<div class="t" style="left:689.30px;top:192.32px;font-size:15.4px;line-height:15.4px;color:#dc2530;font-weight:700;letter-spacing:-0.252px;">Offline</div>
<svg class="i" style="left:853.80px;top:186.66px;width:26.4px;height:26.4px;" viewBox="0 0 24 24"><path fill="rgba(0,0,0,0.41)" fill-rule="evenodd" d="M3 17.25V21h3.75L17.81 9.94l-3.75-3.75L3 17.25zM20.71 7.04c.39-.39.39-1.02 0-1.41l-2.34-2.34c-.39-.39-1.02-.39-1.41 0l-1.83 1.83 3.75 3.75 1.830-1.830z"/></svg>
<svg class="i" style="left:906.50px;top:186.66px;width:26.4px;height:26.4px;" viewBox="0 0 24 24"><path fill="rgba(0,0,0,0.41)" fill-rule="evenodd" d="M6 19c0 1.1.9 2 2 2h8c1.1 0 2-.9 2-2V7H6v12zM19 4h-3.5l-1-1h-5l-1 1H5v2h14V4z"/></svg>
<div class="t" style="left:22.00px;top:238.44px;font-size:15.4px;line-height:15.4px;color:rgba(0,0,0,0.76);letter-spacing:-0.508px;">Tank</div>
<div class="t" style="left:22.00px;top:260.44px;font-size:15.4px;line-height:15.4px;color:rgba(0,0,0,0.76);letter-spacing:-0.190px;">1471</div>
<div class="t" style="left:116.20px;top:249.44px;font-size:15.4px;line-height:15.4px;color:rgba(0,0,0,0.76);letter-spacing:-0.196px;">64% (15688L)</div>
<div class="b" style="left:290.79999999999995px;top:248.48000000000002px;width:110.2px;height:17.5px;background:#e9e7fb;border-radius:5px;overflow:hidden;"></div>
<div class="b" style="left:290.79999999999995px;top:248.48000000000002px;width:70.528px;height:17.5px;background:#b9b9fa;border-radius:5px 0 0 5px;"></div>
<div class="t" style="left:444.70px;top:249.44px;font-size:15.4px;line-height:15.4px;color:rgba(0,0,0,0.76);">42 °C</div>
<div class="t" style="left:584.20px;top:249.44px;font-size:15.4px;line-height:15.4px;color:rgba(0,0,0,0.76);">90%</div>
<div class="b" style="left:680.3000000000002px;top:241.98000000000002px;width:66px;height:30px;background:rgba(209,39,48,0.1);border-radius:8px;"></div>
<div class="t" style="left:689.30px;top:249.44px;font-size:15.4px;line-height:15.4px;color:#dc2530;font-weight:700;letter-spacing:-0.252px;">Offline</div>
<svg class="i" style="left:853.80px;top:243.78px;width:26.4px;height:26.4px;" viewBox="0 0 24 24"><path fill="rgba(0,0,0,0.41)" fill-rule="evenodd" d="M3 17.25V21h3.75L17.81 9.94l-3.75-3.75L3 17.25zM20.71 7.04c.39-.39.39-1.02 0-1.41l-2.34-2.34c-.39-.39-1.02-.39-1.41 0l-1.83 1.83 3.75 3.75 1.830-1.830z"/></svg>
<svg class="i" style="left:906.50px;top:243.78px;width:26.4px;height:26.4px;" viewBox="0 0 24 24"><path fill="rgba(0,0,0,0.41)" fill-rule="evenodd" d="M6 19c0 1.1.9 2 2 2h8c1.1 0 2-.9 2-2V7H6v12zM19 4h-3.5l-1-1h-5l-1 1H5v2h14V4z"/></svg>
<div class="t" style="left:22.00px;top:295.56px;font-size:15.4px;line-height:15.4px;color:rgba(0,0,0,0.76);letter-spacing:-0.508px;">Tank</div>
<div class="t" style="left:22.00px;top:317.56px;font-size:15.4px;line-height:15.4px;color:rgba(0,0,0,0.76);letter-spacing:0.096px;">1311</div>
<div class="t" style="left:116.20px;top:306.56px;font-size:15.4px;line-height:15.4px;color:rgba(0,0,0,0.76);letter-spacing:-0.120px;">55% (418265gal)</div>
<div class="b" style="left:290.79999999999995px;top:305.5999999999999px;width:110.2px;height:17.5px;background:#e9e7fb;border-radius:5px;overflow:hidden;"></div>
<div class="b" style="left:290.79999999999995px;top:305.5999999999999px;width:60.61px;height:17.5px;background:#b9b9fa;border-radius:5px 0 0 5px;"></div>
<div class="t" style="left:444.70px;top:306.56px;font-size:15.4px;line-height:15.4px;color:rgba(0,0,0,0.76);">6 °C</div>
<div class="t" style="left:584.20px;top:306.56px;font-size:15.4px;line-height:15.4px;color:rgba(0,0,0,0.76);">60%</div>
<div class="b" style="left:680.3000000000002px;top:299.0999999999999px;width:66px;height:30px;background:rgba(209,39,48,0.1);border-radius:8px;"></div>
<div class="t" style="left:689.30px;top:306.56px;font-size:15.4px;line-height:15.4px;color:#dc2530;font-weight:700;letter-spacing:-0.252px;">Offline</div>
<svg class="i" style="left:853.80px;top:300.90px;width:26.4px;height:26.4px;" viewBox="0 0 24 24"><path fill="rgba(0,0,0,0.41)" fill-rule="evenodd" d="M3 17.25V21h3.75L17.81 9.94l-3.75-3.75L3 17.25zM20.71 7.04c.39-.39.39-1.02 0-1.41l-2.34-2.34c-.39-.39-1.02-.39-1.41 0l-1.83 1.83 3.75 3.75 1.830-1.830z"/></svg>
<svg class="i" style="left:906.50px;top:300.90px;width:26.4px;height:26.4px;" viewBox="0 0 24 24"><path fill="rgba(0,0,0,0.41)" fill-rule="evenodd" d="M6 19c0 1.1.9 2 2 2h8c1.1 0 2-.9 2-2V7H6v12zM19 4h-3.5l-1-1h-5l-1 1H5v2h14V4z"/></svg>
<div class="t" style="left:22.00px;top:352.68px;font-size:15.4px;line-height:15.4px;color:rgba(0,0,0,0.76);letter-spacing:-0.508px;">Tank</div>
<div class="t" style="left:22.00px;top:374.68px;font-size:15.4px;line-height:15.4px;color:rgba(0,0,0,0.76);letter-spacing:-0.190px;">1288</div>
<div class="t" style="left:116.20px;top:363.68px;font-size:15.4px;line-height:15.4px;color:rgba(0,0,0,0.76);letter-spacing:-0.196px;">88% (28847L)</div>
<div class="b" style="left:290.79999999999995px;top:362.72px;width:110.2px;height:17.5px;background:#e9e7fb;border-radius:5px;overflow:hidden;"></div>
<div class="b" style="left:290.79999999999995px;top:362.72px;width:96.976px;height:17.5px;background:#b9b9fa;border-radius:5px 0 0 5px;"></div>
<div class="t" style="left:444.70px;top:363.68px;font-size:15.4px;line-height:15.4px;color:#dc2530;font-weight:700;">82 °C</div>
<div class="t" style="left:584.20px;top:363.68px;font-size:15.4px;line-height:15.4px;color:rgba(0,0,0,0.76);">28%</div>
<div class="b" style="left:680.3000000000002px;top:356.22px;width:66px;height:30px;background:rgba(209,39,48,0.1);border-radius:8px;"></div>
<div class="t" style="left:689.30px;top:363.68px;font-size:15.4px;line-height:15.4px;color:#dc2530;font-weight:700;letter-spacing:-0.252px;">Offline</div>
<svg class="i" style="left:853.80px;top:358.02px;width:26.4px;height:26.4px;" viewBox="0 0 24 24"><path fill="rgba(0,0,0,0.41)" fill-rule="evenodd" d="M3 17.25V21h3.75L17.81 9.94l-3.75-3.75L3 17.25zM20.71 7.04c.39-.39.39-1.02 0-1.41l-2.34-2.34c-.39-.39-1.02-.39-1.41 0l-1.83 1.83 3.75 3.75 1.830-1.830z"/></svg>
<svg class="i" style="left:906.50px;top:358.02px;width:26.4px;height:26.4px;" viewBox="0 0 24 24"><path fill="rgba(0,0,0,0.41)" fill-rule="evenodd" d="M6 19c0 1.1.9 2 2 2h8c1.1 0 2-.9 2-2V7H6v12zM19 4h-3.5l-1-1h-5l-1 1H5v2h14V4z"/></svg>
<div class="t" style="left:22.00px;top:409.80px;font-size:15.4px;line-height:15.4px;color:rgba(0,0,0,0.76);letter-spacing:-0.508px;">Tank</div>
<div class="t" style="left:22.00px;top:431.80px;font-size:15.4px;line-height:15.4px;color:rgba(0,0,0,0.76);letter-spacing:-0.190px;">1289</div>
<div class="t" style="left:116.20px;top:420.80px;font-size:15.4px;line-height:15.4px;color:rgba(0,0,0,0.76);letter-spacing:-0.160px;">75% (37954gal)</div>
<div class="b" style="left:290.79999999999995px;top:419.8399999999999px;width:110.2px;height:17.5px;background:#e9e7fb;border-radius:5px;overflow:hidden;"></div>
<div class="b" style="left:290.79999999999995px;top:419.8399999999999px;width:82.65px;height:17.5px;background:#b9b9fa;border-radius:5px 0 0 5px;"></div>
<div class="t" style="left:444.70px;top:420.80px;font-size:15.4px;line-height:15.4px;color:rgba(0,0,0,0.76);">22 °C</div>
<div class="t" style="left:584.20px;top:420.80px;font-size:15.4px;line-height:15.4px;color:rgba(0,0,0,0.76);">38%</div>
<div class="b" style="left:680.3000000000002px;top:413.3399999999999px;width:66px;height:30px;background:rgba(209,39,48,0.1);border-radius:8px;"></div>
<div class="t" style="left:689.30px;top:420.80px;font-size:15.4px;line-height:15.4px;color:#dc2530;font-weight:700;letter-spacing:-0.252px;">Offline</div>
<svg class="i" style="left:853.80px;top:415.14px;width:26.4px;height:26.4px;" viewBox="0 0 24 24"><path fill="rgba(0,0,0,0.41)" fill-rule="evenodd" d="M3 17.25V21h3.75L17.81 9.94l-3.75-3.75L3 17.25zM20.71 7.04c.39-.39.39-1.02 0-1.41l-2.34-2.34c-.39-.39-1.02-.39-1.41 0l-1.83 1.83 3.75 3.75 1.830-1.830z"/></svg>
<svg class="i" style="left:906.50px;top:415.14px;width:26.4px;height:26.4px;" viewBox="0 0 24 24"><path fill="rgba(0,0,0,0.41)" fill-rule="evenodd" d="M6 19c0 1.1.9 2 2 2h8c1.1 0 2-.9 2-2V7H6v12zM19 4h-3.5l-1-1h-5l-1 1H5v2h14V4z"/></svg>
<div class="t" style="left:22.00px;top:466.92px;font-size:15.4px;line-height:15.4px;color:rgba(0,0,0,0.76);letter-spacing:-0.508px;">Tank</div>
<div class="t" style="left:22.00px;top:488.92px;font-size:15.4px;line-height:15.4px;color:rgba(0,0,0,0.76);letter-spacing:-0.190px;">1290</div>
<div class="t" style="left:116.20px;top:477.92px;font-size:15.4px;line-height:15.4px;color:rgba(0,0,0,0.76);letter-spacing:-0.167px;">12% (119567L)</div>
<div class="b" style="left:290.79999999999995px;top:476.96000000000004px;width:110.2px;height:17.5px;background:#e9e7fb;border-radius:5px;overflow:hidden;"></div>
<div class="b" style="left:290.79999999999995px;top:476.96000000000004px;width:13.224px;height:17.5px;background:#b9b9fa;border-radius:5px 0 0 5px;"></div>
<div class="t" style="left:444.70px;top:477.92px;font-size:15.4px;line-height:15.4px;color:rgba(0,0,0,0.76);">7 °C</div>
<div class="t" style="left:584.20px;top:477.92px;font-size:15.4px;line-height:15.4px;color:#dc2530;font-weight:700;">11%</div>
<div class="b" style="left:680.3000000000002px;top:470.46000000000004px;width:66px;height:30px;background:rgba(209,39,48,0.1);border-radius:8px;"></div>
<div class="t" style="left:689.30px;top:477.92px;font-size:15.4px;line-height:15.4px;color:#dc2530;font-weight:700;letter-spacing:-0.252px;">Offline</div>
<svg class="i" style="left:853.80px;top:472.26px;width:26.4px;height:26.4px;" viewBox="0 0 24 24"><path fill="rgba(0,0,0,0.41)" fill-rule="evenodd" d="M3 17.25V21h3.75L17.81 9.94l-3.75-3.75L3 17.25zM20.71 7.04c.39-.39.39-1.02 0-1.41l-2.34-2.34c-.39-.39-1.02-.39-1.41 0l-1.83 1.83 3.75 3.75 1.830-1.830z"/></svg>
<svg class="i" style="left:906.50px;top:472.26px;width:26.4px;height:26.4px;" viewBox="0 0 24 24"><path fill="rgba(0,0,0,0.41)" fill-rule="evenodd" d="M6 19c0 1.1.9 2 2 2h8c1.1 0 2-.9 2-2V7H6v12zM19 4h-3.5l-1-1h-5l-1 1H5v2h14V4z"/></svg>
</div>
<div class="b" style="left:1568px;top:770px;width:974px;height:570px;background:#fff;border-radius:10px;box-shadow:0 1px 4px rgba(0,0,0,0.03);"></div>
<div class="t" style="left:1593.00px;top:794.40px;font-size:17.6px;line-height:17.6px;color:rgba(0,0,0,0.87);letter-spacing:0.206px;-webkit-text-stroke:0.5px rgba(0,0,0,0.87);">Alarms</div>
<svg class="i" style="left:2364.00px;top:791.30px;width:22px;height:22px;" viewBox="0 0 24 24"><path fill="rgba(0,0,0,0.41)" fill-rule="evenodd" d="M19.14 12.94c.04-.3.06-.61.06-.94 0-.32-.02-.64-.07-.94l2.03-1.58c.18-.14.23-.41.12-.61l-1.92-3.32c-.12-.22-.37-.29-.59-.22l-2.39.96c-.5-.38-1.03-.7-1.62-.94l-.36-2.54c-.04-.24-.24-.41-.48-.41h-3.84c-.24 0-.43.17-.47.41l-.36 2.54c-.59.24-1.13.57-1.62.94l-2.39-.96c-.22-.08-.47 0-.59.22L2.74 8.87c-.12.21-.08.47.12.61l2.03 1.58c-.05.3-.09.63-.09.94s.02.64.07.94l-2.03 1.58c-.18.14-.23.41-.12.61l1.92 3.32c.12.22.37.29.59.22l2.39-.96c.5.38 1.03.7 1.62.94l.36 2.54c.05.24.24.41.48.41h3.84c.24 0 .44-.17.47-.41l.36-2.54c.59-.24 1.13-.56 1.62-.94l2.39.96c.22.08.47 0 .59-.22l1.92-3.32c.12-.22.07-.47-.12-.61l-2.01-1.58zM12 15.6c-1.98 0-3.6-1.62-3.6-3.6s1.62-3.6 3.6-3.6 3.6 1.62 3.6 3.6-1.62 3.6-3.6 3.6z"/></svg>
<svg class="i" style="left:2399.00px;top:791.30px;width:22px;height:22px;" viewBox="0 0 24 24"><path fill="rgba(0,0,0,0.41)" fill-rule="evenodd" d="M15.5 14h-.79l-.28-.27C15.41 12.59 16 11.11 16 9.5 16 5.91 13.09 3 9.5 3S3 5.91 3 9.5 5.91 16 9.5 16c1.61 0 3.09-.59 4.23-1.57l.27.28v.79l5 4.99L20.49 19l-4.99-5zm-6 0C7.01 14 5 11.99 5 9.5S7.01 5 9.5 5 14 7.01 14 9.5 11.99 14 9.5 14z"/></svg>
<svg class="i" style="left:2434.00px;top:791.30px;width:22px;height:22px;" viewBox="0 0 24 24"><path fill="rgba(0,0,0,0.41)" fill-rule="evenodd" d="M10 18h4v-2h-4v2zM3 6v2h18V6H3zm3 7h12v-2H6v2z"/></svg>
<svg class="i" style="left:2470.00px;top:791.30px;width:22px;height:22px;" viewBox="0 0 24 24"><path fill="rgba(0,0,0,0.41)" fill-rule="evenodd" d="M14 2H6c-1.1 0-2 .9-2 2v16c0 1.1.9 2 2 2h12c1.1 0 2-.9 2-2V8l-6-6zm-1 7V3.500L18.500 9H13zM11.800 12H18V18.200L15.900 16.100 11.400 20.600 9.400 18.600 13.900 14.100z"/></svg>
<svg class="i" style="left:2505.00px;top:791.30px;width:22px;height:22px;" viewBox="0 0 24 24"><path fill="rgba(0,0,0,0.41)" fill-rule="evenodd" d="M7 14H5v5h5v-2H7v-3zm-2-4h2V7h3V5H5v5zm12 7h-3v2h5v-5h-2v3zM14 5v2h3v3h2V5h-5z"/></svg>
<div class="t" style="left:1590.00px;top:844.53px;font-size:13.2px;line-height:13.2px;color:rgba(0,0,0,0.36);letter-spacing:0.029px;-webkit-text-stroke:0.55px rgba(0,0,0,0.36);">Tank</div>
<div class="t" style="left:1736.60px;top:844.53px;font-size:13.2px;line-height:13.2px;color:rgba(0,0,0,0.36);letter-spacing:0.011px;-webkit-text-stroke:0.55px rgba(0,0,0,0.36);">Created time</div>
<div class="t" style="left:2033.00px;top:844.53px;font-size:13.2px;line-height:13.2px;color:rgba(0,0,0,0.36);letter-spacing:-0.030px;-webkit-text-stroke:0.55px rgba(0,0,0,0.36);">Type</div>
<div class="t" style="left:2272.00px;top:844.53px;font-size:13.2px;line-height:13.2px;color:rgba(0,0,0,0.36);letter-spacing:0.064px;-webkit-text-stroke:0.55px rgba(0,0,0,0.36);">Details</div>
<svg class="i" style="left:1817.00px;top:844.00px;width:16px;height:16px;" viewBox="0 0 24 24"><path fill="rgba(0,0,0,0.7)" fill-rule="evenodd" d="M20 12l-1.41-1.41L13 16.17V4h-2v12.17l-5.58-5.59L4 12l8 8 8-8z"/></svg>
<div class="b" style="left:1577px;top:883px;width:956px;height:1px;background:rgba(0,0,0,0.12);"></div>
<div class="t" style="left:1995.50px;top:1101.96px;font-size:15.4px;line-height:15.4px;color:rgba(0,0,0,0.8);font-weight:700;letter-spacing:-0.200px;">No alarms found</div>
<div class="b" style="left:0px;top:0px;width:2560px;height:1358px;background:rgba(0,0,0,0.32);"></div>
<div class="b" style="left:275px;top:130px;width:2285px;height:1px;background:#b8b4b4;"></div>
<div class="b" style="left:0px;top:0px;width:2560px;height:4px;background:#3b3b3b;"></div>
<div class="b" style="left:950px;top:542px;width:594px;height:279px;background:#fff;border-radius:5px;box-shadow:0 11px 15px -7px rgba(0,0,0,.2),0 24px 38px 3px rgba(0,0,0,.14),0 9px 46px 8px rgba(0,0,0,.12);"></div>
<div class="t" style="left:976.80px;top:567.28px;font-size:22px;line-height:22px;color:rgba(0,0,0,0.87);letter-spacing:0.226px;-webkit-text-stroke:0.5px rgba(0,0,0,0.87);">Tanks</div>
<div class="t" style="left:976.80px;top:607.60px;font-size:17.6px;line-height:17.6px;color:rgba(0,0,0,0.6);letter-spacing:0.099px;">Our operational data shows a mixed performance. While we have</div>
<div class="t" style="left:976.80px;top:626.85px;font-size:17.6px;line-height:17.6px;color:rgba(0,0,0,0.6);letter-spacing:0.152px;">some devices reporting healthy battery levels and connections,</div>
<div class="t" style="left:976.80px;top:646.10px;font-size:17.6px;line-height:17.6px;color:rgba(0,0,0,0.6);letter-spacing:0.211px;">there are concerning trends with multiple devices indicating low</div>
<div class="t" style="left:976.80px;top:665.35px;font-size:17.6px;line-height:17.6px;color:rgba(0,0,0,0.6);letter-spacing:0.161px;">battery, high temperatures, and low fuel. Customer satisfaction, as</div>
<div class="t" style="left:976.80px;top:684.60px;font-size:17.6px;line-height:17.6px;color:rgba(0,0,0,0.6);letter-spacing:0.130px;">inferred from device health, is likely impacted by these issues,</div>
<div class="t" style="left:976.80px;top:703.85px;font-size:17.6px;line-height:17.6px;color:rgba(0,0,0,0.6);letter-spacing:0.212px;">suggesting a need for immediate attention to maintenance and</div>
<div class="t" style="left:976.80px;top:723.10px;font-size:17.6px;line-height:17.6px;color:rgba(0,0,0,0.6);letter-spacing:0.167px;">resource management to prevent service disruptions and improve</div>
<div class="t" style="left:976.80px;top:742.35px;font-size:17.6px;line-height:17.6px;color:rgba(0,0,0,0.6);letter-spacing:0.150px;">overall reliability.</div>
<div class="b" style="left:1459.2px;top:772px;width:76px;height:40px;background:#00695c;border-radius:5px;box-shadow:0 3px 1px -2px rgba(0,0,0,.2),0 2px 2px 0 rgba(0,0,0,.14),0 1px 5px 0 rgba(0,0,0,.12);"></div>
<div class="t" style="left:1476.40px;top:784.26px;font-size:15.4px;line-height:15.4px;color:#fff;font-weight:700;letter-spacing:-0.227px;">Close</div>
</body></html>
